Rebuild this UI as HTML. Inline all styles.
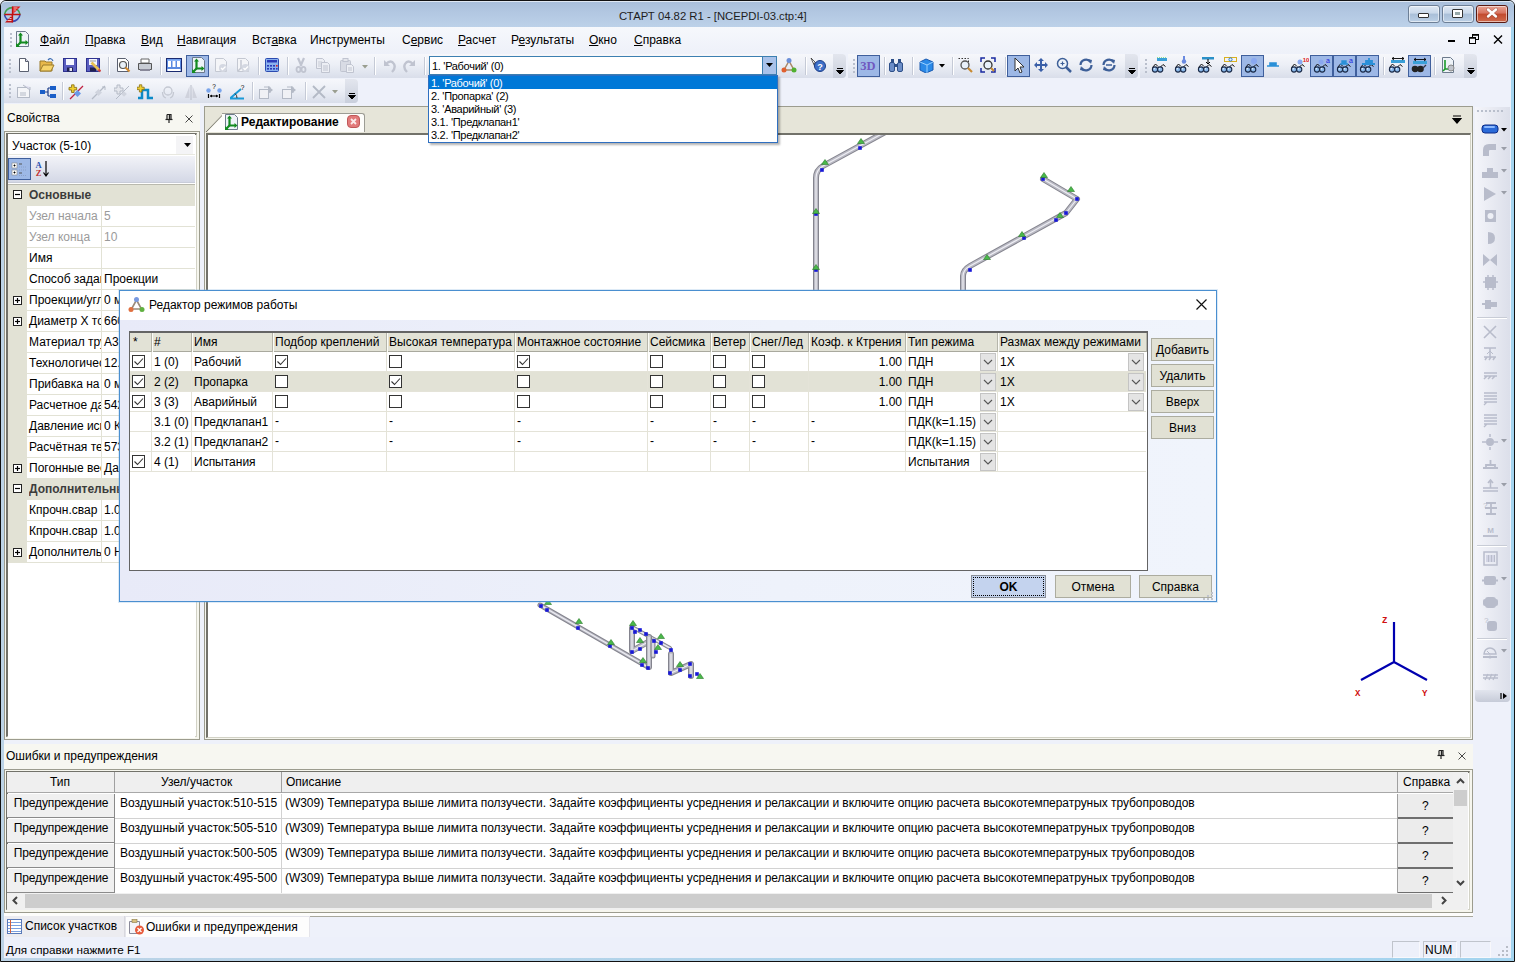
<!DOCTYPE html><html><head><meta charset="utf-8"><style>
*{box-sizing:border-box;margin:0;padding:0}
html,body{width:1515px;height:962px;overflow:hidden;background:#eef1f9;font-family:"Liberation Sans",sans-serif;font-size:12px;color:#000}
.abs{position:absolute}
.t{position:absolute;white-space:nowrap;line-height:14px}
.tb{position:absolute;height:24px;background:linear-gradient(#f6f7fb 0%,#eceff6 45%,#d9deea 100%);border-radius:0 4px 4px 0}
.grip{position:absolute;width:2px;height:14px;background:repeating-linear-gradient(#b9bfcc 0 2px,transparent 2px 4px)}
.sep{position:absolute;width:1px;height:18px;background:#c5cad6;box-shadow:1px 0 0 #fff}
.hl{position:absolute;background:#9db8e6;border:1px solid #3f5f9c}
.chev{position:absolute;width:13px;height:24px;background:linear-gradient(#e3e6ee,#c9cfdc);border-radius:0 4px 4px 0}
.ico{position:absolute}
u{text-decoration:underline;text-underline-offset:1px;text-decoration-thickness:1px}
</style></head><body>
<div class="abs" style="left:0;top:0;width:1515px;height:962px;background:linear-gradient(90deg,#bcd3e6 0,#bcd3e6 6px,#a4d4ef 1500px);border:1px solid #111;border-radius:6px 6px 0 0"></div>
<div class="abs" style="left:1px;top:1px;width:1513px;height:26px;background:linear-gradient(#a9bfdb 0%,#b2c7e1 40%,#bcd1e9 100%);border-radius:5px 5px 0 0;border-top:1px solid #dfe8f3"></div>
<div class="t" style="left:619px;top:9px;font-size:11.3px;color:#1e1e1e">СТАРТ 04.82 R1 - [NCEPDI-03.ctp:4]</div>
<svg class="ico" style="left:3px;top:5px" width="19" height="19" viewBox="0 0 19 19"><path d="M1.5 9.5A7.8 7.8 0 0 1 17 9.5" fill="none" stroke="#40a050" stroke-width="1.6"/><path d="M1.5 9.5A7.8 7.8 0 0 0 17 9.5" fill="none" stroke="#3848b0" stroke-width="1.6"/><path d="M9.5 1.5h8l-8 8z" fill="#d81818"/><path d="M9.5 9.5v8H2z" fill="#c01818"/><path d="M1.5 9.5h16M9.5 1.5v16" stroke="#c01010" stroke-width="1.3"/><path d="M10.5 3h4M10.5 5h2.5M10.5 7h1M4.5 15.5h4M6.5 13.5h2M7.5 11.5h1" stroke="#f8d0d0" stroke-width=".9"/></svg>
<div class="abs" style="left:1408px;top:5px;width:32px;height:18px;background:linear-gradient(#dfe8f3 0%,#c9d8ea 45%,#a9bfd8 50%,#bcd0e6 100%);border:1px solid #6d7f96;border-radius:3px;box-shadow:inset 0 0 0 1px rgba(255,255,255,.55)"></div>
<div class="abs" style="left:1442px;top:5px;width:32px;height:18px;background:linear-gradient(#dfe8f3 0%,#c9d8ea 45%,#a9bfd8 50%,#bcd0e6 100%);border:1px solid #6d7f96;border-radius:3px;box-shadow:inset 0 0 0 1px rgba(255,255,255,.55)"></div>
<div class="abs" style="left:1476px;top:5px;width:32px;height:18px;background:linear-gradient(#e8a393 0%,#d7735f 45%,#c24a2e 50%,#cf6a4c 100%);border:1px solid #5a1a12;border-radius:3px;box-shadow:inset 0 0 0 1px rgba(255,255,255,.55)"></div>
<div class="abs" style="left:1418px;top:13px;width:11px;height:5px;background:#fff;border:1px solid #333;border-radius:1px"></div>
<div class="abs" style="left:1452px;top:9px;width:11px;height:9px;background:#fff;border:1px solid #333;border-radius:1px"></div><div class="abs" style="left:1455px;top:12px;width:5px;height:3px;background:#9aa;"></div>
<svg class="ico" style="left:1485px;top:7px" width="14" height="12" viewBox="0 0 14 12"><path d="M3 2.5L11 9.5M11 2.5L3 9.5" stroke="#5a3028" stroke-width="3.6" stroke-linecap="round" opacity=".35"/><path d="M3 2.5L11 9.5M11 2.5L3 9.5" stroke="#fff" stroke-width="2.4" stroke-linecap="round"/></svg>
<div class="abs" style="left:4px;top:27px;width:1507px;height:931px;background:#eef1fa"></div>
<div class="abs" style="left:4px;top:27px;width:1507px;height:26px;background:linear-gradient(#f6f8fc,#eef1f9)"></div>
<div class="grip" style="left:10px;top:33px"></div>
<svg class="ico" style="left:14px;top:31px" width="16" height="17" viewBox="0 0 16 17"><path d="M2.5 .5h9l3 3v12h-12z" fill="#eef3f8" stroke="#6c7a8c"/><path d="M6.5 3v8.5h6" fill="none" stroke="#138a20" stroke-width="2.2"/><path d="M6.5 11.5l-3.5 3.5" stroke="#138a20" stroke-width="2.2"/><path d="M4 4.5l2.5-3 2.5 3zM11.5 9l3 2.5-3 2.5zM2 12v4h4z" fill="#138a20"/></svg>
<div class="t" style="left:40px;top:33px"><u>Ф</u>айл</div>
<div class="t" style="left:85px;top:33px"><u>П</u>равка</div>
<div class="t" style="left:141px;top:33px"><u>В</u>ид</div>
<div class="t" style="left:177px;top:33px"><u>Н</u>авигация</div>
<div class="t" style="left:252px;top:33px">Вст<u>а</u>вка</div>
<div class="t" style="left:310px;top:33px">Инструменты</div>
<div class="t" style="left:402px;top:33px">С<u>е</u>рвис</div>
<div class="t" style="left:458px;top:33px"><u>Р</u>асчет</div>
<div class="t" style="left:511px;top:33px">Р<u>е</u>зультаты</div>
<div class="t" style="left:589px;top:33px"><u>О</u>кно</div>
<div class="t" style="left:634px;top:33px"><u>С</u>правка</div>
<div class="abs" style="left:1448px;top:40px;width:7px;height:2px;background:#000"></div>
<svg class="ico" style="left:1469px;top:34px" width="10" height="10" viewBox="0 0 10 10"><rect x="3.5" y=".5" width="6" height="5" fill="none" stroke="#000"/><rect x=".5" y="3.5" width="6" height="6" fill="#f4f6fb" stroke="#000"/><path d="M1 4h5" stroke="#000" stroke-width="1.5"/><path d="M4 1h5" stroke="#000" stroke-width="1.5"/></svg>
<svg class="ico" style="left:1493px;top:35px" width="10" height="9" viewBox="0 0 10 9"><path d="M1 .5l8 8M9 .5l-8 8" stroke="#000" stroke-width="1.4"/></svg>
<div class="tb" style="left:4px;top:54px;width:842px"></div>
<div class="grip" style="left:9px;top:59px"></div>
<svg class="ico" style="left:16px;top:57px" width="16" height="16" viewBox="0 0 16 16"><path d="M3.5 1.5h6l3 3v10h-9z" fill="#fff" stroke="#5a6070"/><path d="M9.5 1.5v3h3" fill="#dde" stroke="#5a6070"/></svg>
<svg class="ico" style="left:39px;top:57px" width="16" height="16" viewBox="0 0 16 16"><path d="M1 4h5l1 1h6v9H1z" fill="#e8b84a" stroke="#9a7a2a"/><path d="M1 14l3-6h11l-3 6z" fill="#f6d36a" stroke="#9a7a2a"/><path d="M9 3q3-3 5 1" fill="none" stroke="#3a6ab0" stroke-width="1.2"/></svg>
<svg class="ico" style="left:62px;top:57px" width="16" height="16" viewBox="0 0 16 16"><rect x="1.5" y="1.5" width="13" height="13" fill="#5a5ec0" stroke="#2e3290"/><rect x="4" y="2" width="8" height="6" fill="#f4f6ff"/><rect x="5" y="10.5" width="6" height="4" fill="#1e2050"/><rect x="7.5" y="11" width="2.5" height="3" fill="#e8e8f0"/></svg>
<svg class="ico" style="left:85px;top:57px" width="16" height="16" viewBox="0 0 16 16"><rect x="1.5" y="1.5" width="13" height="13" fill="#5a5ec0" stroke="#2e3290"/><rect x="4" y="2" width="8" height="6" fill="#f4f6ff"/><path d="M5 4h6" stroke="#999"/><rect x="5" y="10.5" width="6" height="4" fill="#1e2050"/><path d="M6.5 5.5l8 8" stroke="#e8c050" stroke-width="2.6"/><path d="M13.5 12.5l2 2" stroke="#d04040" stroke-width="2.2"/></svg>
<svg class="ico" style="left:115px;top:57px" width="16" height="16" viewBox="0 0 16 16"><path d="M2.5 1.5h8l3 3v10h-11z" fill="#fff" stroke="#5a6070"/><circle cx="8" cy="8" r="3.5" fill="#e8f0f8" stroke="#555" stroke-width="1.2"/><path d="M10.5 10.5l4 4" stroke="#d08a30" stroke-width="2.2"/></svg>
<svg class="ico" style="left:137px;top:57px" width="16" height="16" viewBox="0 0 16 16"><path d="M4 2h8v4H4z" fill="#fff" stroke="#666"/><path d="M1.5 6.5h13v6h-13z" fill="#c8ccd4" stroke="#555"/><path d="M3 12h10v2H3z" fill="#889"/></svg>
<svg class="ico" style="left:166px;top:57px" width="16" height="16" viewBox="0 0 16 16"><rect x=".5" y="1.5" width="15" height="13" fill="#5a8ae0" stroke="#1a2a70"/><rect x="1.5" y="2.5" width="13" height="1.5" fill="#8ab4f8"/><rect x="2" y="4" width="3" height="6" fill="#fff"/><rect x="6.5" y="4" width="3" height="6" fill="#fff"/><rect x="11" y="4" width="3" height="6" fill="#fff"/><rect x="1.5" y="12" width="13" height="2" fill="#fff"/></svg>
<div class="sep" style="left:108px;top:57px"></div>
<div class="sep" style="left:160px;top:57px"></div>
<div class="hl" style="left:186px;top:55px;width:23px;height:22px"></div>
<svg class="ico" style="left:190px;top:57px" width="16" height="16" viewBox="0 0 16 16"><path d="M2.5 .5h9l3 3v12h-12z" fill="#eef3f8" stroke="#6c7a8c"/><path d="M6.5 3v8.5h6" fill="none" stroke="#138a20" stroke-width="2.2"/><path d="M6.5 11.5l-3.5 3.5" stroke="#138a20" stroke-width="2.2"/><path d="M4 4.5l2.5-3 2.5 3zM11.5 9l3 2.5-3 2.5zM2 12v4h4z" fill="#138a20"/></svg>
<svg class="ico" style="left:213px;top:57px" width="16" height="16" viewBox="0 0 16 16"><path d="M2.5 1.5h8l3 3v10h-11z" fill="#f4f5f8" stroke="#c4c8d2"/><circle cx="10" cy="11" r="4" fill="#d4d8e2"/><path d="M8 11l1.5 1.5 3-3" fill="none" stroke="#fff" stroke-width="1.3"/></svg>
<svg class="ico" style="left:235px;top:57px" width="16" height="16" viewBox="0 0 16 16"><path d="M2.5 1.5h8l3 3v10h-11z" fill="#f4f5f8" stroke="#c4c8d2"/><path d="M6 3v8l-3 3M6 11h4" fill="none" stroke="#c4c8d2" stroke-width="1.5"/><circle cx="10.5" cy="11" r="4" fill="#d4d8e2"/><path d="M8.5 11l1.5 1.5 3-3" fill="none" stroke="#fff" stroke-width="1.3"/></svg>
<div class="sep" style="left:258px;top:57px"></div>
<svg class="ico" style="left:264px;top:57px" width="16" height="16" viewBox="0 0 16 16"><rect x="1.5" y="1.5" width="13" height="13" rx="1" fill="#8ab0ee" stroke="#2a4ab0"/><rect x="3" y="3" width="10" height="2.5" fill="#2a3ab8"/><g fill="#2a3ab8"><rect x="3" y="8" width="2" height="1.6"/><rect x="6" y="8" width="2" height="1.6"/><rect x="9" y="8" width="2" height="1.6"/><rect x="3" y="11" width="2" height="1.6"/><rect x="6" y="11" width="2" height="1.6"/><rect x="9" y="11" width="2" height="1.6"/></g><rect x="12" y="8" width="1.6" height="1.6" fill="#e02020"/><rect x="12" y="11" width="1.6" height="1.6" fill="#2a3ab8"/></svg>
<div class="sep" style="left:287px;top:57px"></div>
<svg class="ico" style="left:293px;top:57px" width="16" height="16" viewBox="0 0 16 16"><path d="M5 1l3.5 8M11 1L7.5 9" stroke="#c0c4d0" stroke-width="2.2"/><ellipse cx="5.5" cy="12.5" rx="2" ry="2.6" fill="none" stroke="#c0c4d0" stroke-width="1.8"/><ellipse cx="10.5" cy="12.5" rx="2" ry="2.6" fill="none" stroke="#c0c4d0" stroke-width="1.8"/></svg>
<svg class="ico" style="left:315px;top:57px" width="16" height="16" viewBox="0 0 16 16"><path d="M1.5 1.5h6l2 2v8h-8z" fill="#eceef4" stroke="#c0c4d0"/><path d="M3 5h4M3 7h4M3 9h4" stroke="#c8ccd6"/><path d="M6.5 5.5h6l2 2v8h-8z" fill="#eceef4" stroke="#c0c4d0"/><path d="M8 9h5M8 11h5M8 13h5" stroke="#c0c4d0"/></svg>
<svg class="ico" style="left:339px;top:57px" width="16" height="16" viewBox="0 0 16 16"><rect x="1.5" y="3.5" width="10" height="11" rx="1" fill="#d8dbe4" stroke="#c0c4d0"/><rect x="4" y="1.5" width="5" height="3" fill="#e4e6ec" stroke="#c0c4d0"/><path d="M7.5 7.5h5l2 2v6h-7z" fill="#eef0f5" stroke="#c0c4d0"/><path d="M9 11h4M9 13h4" stroke="#c0c4d0"/></svg>
<svg class="ico" style="left:362px;top:65px" width="6" height="4" viewBox="0 0 6 4"><path d="M0 0h6L3 3.5z" fill="#9a9e90"/></svg>
<div class="sep" style="left:374px;top:57px"></div>
<svg class="ico" style="left:381px;top:57px" width="16" height="16" viewBox="0 0 16 16"><path d="M3 3v6h6z" fill="#c0c4d0"/><path d="M5 7q5-5 8 0q2 4-2 8" fill="none" stroke="#c0c4d0" stroke-width="2.4"/></svg>
<svg class="ico" style="left:402px;top:57px" width="16" height="16" viewBox="0 0 16 16"><path d="M13 3v6H7z" fill="#c0c4d0"/><path d="M11 7q-5-5-8 0q-2 4 2 8" fill="none" stroke="#c0c4d0" stroke-width="2.4"/></svg>
<div class="sep" style="left:424px;top:57px"></div>
<svg class="ico" style="left:781px;top:57px" width="16" height="16" viewBox="0 0 16 16"><path d="M8 4L3 13h10z" fill="none" stroke="#aa8866" stroke-width="1.5"/><circle cx="8" cy="3.5" r="2.5" fill="#6b8fd8"/><circle cx="3" cy="13" r="2.5" fill="#e06030"/><circle cx="13" cy="13" r="2.5" fill="#50b030"/></svg>
<div class="sep" style="left:805px;top:57px"></div>
<svg class="ico" style="left:810px;top:57px" width="16" height="16" viewBox="0 0 16 16"><path d="M1 1l5 5-2 0 1 4z" fill="#fff" stroke="#333" stroke-width=".8"/><circle cx="10" cy="9" r="5.5" fill="#3d6fc8" stroke="#1d3f88"/><text x="10" y="12.5" font-size="9" font-weight="bold" text-anchor="middle" fill="#fff" font-family="Liberation Sans">?</text></svg>
<div class="chev" style="left:833px;top:54px"></div>
<svg class="ico" style="left:836px;top:68px" width="8" height="7" viewBox="0 0 8 7"><path d="M1 .5h6M.5 2.5h7l-3.5 3.5z" stroke="#000" fill="#000" stroke-width="1"/></svg>
<div class="tb" style="left:848px;top:54px;width:290px"></div>
<div class="grip" style="left:853px;top:59px"></div>
<div class="hl" style="left:857px;top:55px;width:23px;height:22px"></div>
<svg class="ico" style="left:860px;top:57px" width="16" height="16" viewBox="0 0 16 16"><text x="8" y="13" font-size="12.5" font-weight="bold" text-anchor="middle" fill="#7058c0" font-family="Liberation Serif">3D</text></svg>
<div class="sep" style="left:884px;top:57px"></div>
<svg class="ico" style="left:888px;top:57px" width="16" height="16" viewBox="0 0 16 16"><rect x="1.5" y="5.5" width="5" height="9" rx="1.5" fill="#6c8ec8" stroke="#2d4f88"/><rect x="9.5" y="5.5" width="5" height="9" rx="1.5" fill="#6c8ec8" stroke="#2d4f88"/><rect x="3" y="2" width="3" height="4" fill="#2d4f88"/><rect x="10" y="2" width="3" height="4" fill="#2d4f88"/><rect x="6" y="7" width="4" height="3" fill="#2d4f88"/></svg>
<div class="sep" style="left:912px;top:57px"></div>
<svg class="ico" style="left:918px;top:57px" width="16" height="16" viewBox="0 0 16 16"><path d="M2 5l6-3 7 3v8l-7 3-6-3z" fill="#2a8ae8" stroke="#1a5ab0"/><path d="M2 5l7 3 6-3M9 8v8" fill="none" stroke="#9ad0ff"/></svg>
<svg class="ico" style="left:939px;top:64px" width="6" height="4" viewBox="0 0 6 4"><path d="M0 0h6L3 3.5z" fill="#000"/></svg>
<div class="sep" style="left:952px;top:57px"></div>
<svg class="ico" style="left:957px;top:57px" width="16" height="16" viewBox="0 0 16 16"><path d="M1.5 1.5h10v9" fill="none" stroke="#333" stroke-dasharray="1.5 1.5"/><circle cx="8" cy="8" r="4" fill="#e8f0fa" stroke="#555" stroke-width="1.3"/><path d="M11 11l4 4" stroke="#c88a30" stroke-width="2.2"/></svg>
<svg class="ico" style="left:980px;top:57px" width="16" height="16" viewBox="0 0 16 16"><path d="M1 5V1h4M11 1h4v4M15 11v4h-4M5 15H1v-4" fill="none" stroke="#1a2aa0" stroke-width="1.5"/><circle cx="8" cy="8" r="4" fill="#e8f0fa" stroke="#333" stroke-width="1.3"/><path d="M11 11l3 3" stroke="#c88a30" stroke-width="2"/></svg>
<div class="sep" style="left:1005px;top:57px"></div>
<div class="hl" style="left:1007px;top:55px;width:23px;height:22px"></div>
<svg class="ico" style="left:1011px;top:57px" width="16" height="16" viewBox="0 0 16 16"><path d="M4 1v13l3-3 2 5 2-1-2-5h4z" fill="#fff" stroke="#333"/></svg>
<svg class="ico" style="left:1033px;top:57px" width="16" height="16" viewBox="0 0 16 16"><path d="M8 1l3 3H9v3h3V5l3 3-3 3V9H9v3h2l-3 3-3-3h2V9H4v2L1 8l3-3v2h3V4H5z" fill="#3a5fa8"/></svg>
<svg class="ico" style="left:1056px;top:57px" width="16" height="16" viewBox="0 0 16 16"><circle cx="6.5" cy="6.5" r="5" fill="#eef4fa" stroke="#3d5f98" stroke-width="1.5"/><path d="M4.5 6.5h4M6.5 4.5v4" stroke="#3d5f98" stroke-width="1.2"/><path d="M10 10l5 5" stroke="#3d5f98" stroke-width="2.5"/></svg>
<svg class="ico" style="left:1078px;top:57px" width="16" height="16" viewBox="0 0 16 16"><path d="M2.5 8a5.5 5.5 0 0 1 10-3M13.5 8a5.5 5.5 0 0 1-10 3" fill="none" stroke="#3d5f98" stroke-width="2.2"/><path d="M10 2l4 1-1 4zM6 14l-4-1 1-4z" fill="#3d5f98"/></svg>
<svg class="ico" style="left:1101px;top:57px" width="16" height="16" viewBox="0 0 16 16"><path d="M2.5 8a5.5 5.5 0 0 1 10-3M13.5 8a5.5 5.5 0 0 1-10 3" fill="none" stroke="#3d5f98" stroke-width="2.2"/><path d="M10 2l4 1-1 4zM6 14l-4-1 1-4z" fill="#3d5f98"/><path d="M5 8h6" stroke="#3d5f98" stroke-width="1.5"/></svg>
<div class="chev" style="left:1125px;top:54px"></div>
<svg class="ico" style="left:1128px;top:68px" width="8" height="7" viewBox="0 0 8 7"><path d="M1 .5h6M.5 2.5h7l-3.5 3.5z" stroke="#000" fill="#000" stroke-width="1"/></svg>
<div class="tb" style="left:1140px;top:54px;width:337px"></div>
<div class="grip" style="left:1145px;top:59px"></div>
<svg class="ico" style="left:1151px;top:57px" width="16" height="16" viewBox="0 0 16 16"><path d="M1.5 10.5L4.5 7l2.5 2.5M9 10.5L12 7.5l2.5 2" fill="none" stroke="#111" stroke-width="1"/><circle cx="4" cy="12.5" r="2.6" fill="#8ab8ea" stroke="#1a2a48" stroke-width="1.1"/><circle cx="9.2" cy="12.5" r="2.6" fill="#8ab8ea" stroke="#1a2a48" stroke-width="1.1"/><circle cx="3.3" cy="11.8" r=".8" fill="#e8f4ff"/><circle cx="8.5" cy="11.8" r=".8" fill="#e8f4ff"/></svg>
<svg class="ico" style="left:1174px;top:57px" width="16" height="16" viewBox="0 0 16 16"><path d="M1.5 10.5L4.5 7l2.5 2.5M9 10.5L12 7.5l2.5 2" fill="none" stroke="#111" stroke-width="1"/><circle cx="4" cy="12.5" r="2.6" fill="#8ab8ea" stroke="#1a2a48" stroke-width="1.1"/><circle cx="9.2" cy="12.5" r="2.6" fill="#8ab8ea" stroke="#1a2a48" stroke-width="1.1"/><circle cx="3.3" cy="11.8" r=".8" fill="#e8f4ff"/><circle cx="8.5" cy="11.8" r=".8" fill="#e8f4ff"/></svg>
<svg class="ico" style="left:1197px;top:57px" width="16" height="16" viewBox="0 0 16 16"><path d="M1.5 10.5L4.5 7l2.5 2.5M9 10.5L12 7.5l2.5 2" fill="none" stroke="#111" stroke-width="1"/><circle cx="4" cy="12.5" r="2.6" fill="#8ab8ea" stroke="#1a2a48" stroke-width="1.1"/><circle cx="9.2" cy="12.5" r="2.6" fill="#8ab8ea" stroke="#1a2a48" stroke-width="1.1"/><circle cx="3.3" cy="11.8" r=".8" fill="#e8f4ff"/><circle cx="8.5" cy="11.8" r=".8" fill="#e8f4ff"/></svg>
<svg class="ico" style="left:1220px;top:57px" width="16" height="16" viewBox="0 0 16 16"><path d="M1.5 10.5L4.5 7l2.5 2.5M9 10.5L12 7.5l2.5 2" fill="none" stroke="#111" stroke-width="1"/><circle cx="4" cy="12.5" r="2.6" fill="#8ab8ea" stroke="#1a2a48" stroke-width="1.1"/><circle cx="9.2" cy="12.5" r="2.6" fill="#8ab8ea" stroke="#1a2a48" stroke-width="1.1"/><circle cx="3.3" cy="11.8" r=".8" fill="#e8f4ff"/><circle cx="8.5" cy="11.8" r=".8" fill="#e8f4ff"/></svg>
<svg class="ico" style="left:1290px;top:57px" width="16" height="16" viewBox="0 0 16 16"><path d="M1.5 10.5L4.5 7l2.5 2.5M9 10.5L12 7.5l2.5 2" fill="none" stroke="#111" stroke-width="1"/><circle cx="4" cy="12.5" r="2.6" fill="#8ab8ea" stroke="#1a2a48" stroke-width="1.1"/><circle cx="9.2" cy="12.5" r="2.6" fill="#8ab8ea" stroke="#1a2a48" stroke-width="1.1"/><circle cx="3.3" cy="11.8" r=".8" fill="#e8f4ff"/><circle cx="8.5" cy="11.8" r=".8" fill="#e8f4ff"/></svg>
<svg class="ico" style="left:1155px;top:57px" width="12" height="6" viewBox="0 0 12 6"><rect x="2" y="1" width="10" height="3" fill="#3aa0d8"/><path d="M2 0h10" stroke="#3c3" stroke-dasharray="1 1"/></svg>
<svg class="ico" style="left:1180px;top:56px" width="8" height="8" viewBox="0 0 8 8"><rect x="3" y="0" width="2" height="4" fill="#6a8ae0"/><circle cx="4" cy="5.5" r="2.2" fill="#6a8ae0"/></svg>
<svg class="ico" style="left:1202px;top:57px" width="12" height="8" viewBox="0 0 12 8"><rect x="0" y="0" width="12" height="2.5" fill="#2a90c8"/><path d="M6 2v5M4 5l2 2 2-2" stroke="#000" fill="none"/></svg>
<svg class="ico" style="left:1224px;top:57px" width="13" height="6" viewBox="0 0 13 6"><rect x=".5" y=".5" width="12" height="4" fill="none" stroke="#d8b020"/><circle cx="6.5" cy="2.5" r="1.6" fill="none" stroke="#2a7ac8"/></svg>
<div class="hl" style="left:1241px;top:55px;width:23px;height:22px"></div>
<svg class="ico" style="left:1244px;top:57px" width="16" height="16" viewBox="0 0 16 16"><path d="M1.5 10.5L4.5 7l2.5 2.5M9 10.5L12 7.5l2.5 2" fill="none" stroke="#111" stroke-width="1"/><circle cx="4" cy="12.5" r="2.6" fill="#8ab8ea" stroke="#1a2a48" stroke-width="1.1"/><circle cx="9.2" cy="12.5" r="2.6" fill="#8ab8ea" stroke="#1a2a48" stroke-width="1.1"/><circle cx="3.3" cy="11.8" r=".8" fill="#e8f4ff"/><circle cx="8.5" cy="11.8" r=".8" fill="#e8f4ff"/></svg>
<svg class="ico" style="left:1250px;top:57px" width="8" height="7" viewBox="0 0 8 7"><circle cx="4" cy="4" r="3" fill="#8aa8f0"/></svg>
<svg class="ico" style="left:1266px;top:61px" width="14" height="6" viewBox="0 0 14 6"><path d="M1 5h12M4 5V2h6v3" fill="#2a90d8" stroke="#2a90d8" stroke-width="1.6"/></svg>
<svg class="ico" style="left:1296px;top:57px" width="13" height="8" viewBox="0 0 13 8"><circle cx="4" cy="5" r="2.5" fill="#8aa8f0"/><text x="10" y="5" font-size="6" font-weight="bold" fill="#e02020" text-anchor="middle" font-family="Liberation Sans">10</text></svg>
<div class="hl" style="left:1310px;top:55px;width:23px;height:22px"></div>
<svg class="ico" style="left:1313px;top:57px" width="16" height="16" viewBox="0 0 16 16"><path d="M1.5 10.5L4.5 7l2.5 2.5M9 10.5L12 7.5l2.5 2" fill="none" stroke="#111" stroke-width="1"/><circle cx="4" cy="12.5" r="2.6" fill="#8ab8ea" stroke="#1a2a48" stroke-width="1.1"/><circle cx="9.2" cy="12.5" r="2.6" fill="#8ab8ea" stroke="#1a2a48" stroke-width="1.1"/><circle cx="3.3" cy="11.8" r=".8" fill="#e8f4ff"/><circle cx="8.5" cy="11.8" r=".8" fill="#e8f4ff"/></svg>
<div class="hl" style="left:1333px;top:55px;width:23px;height:22px"></div>
<svg class="ico" style="left:1336px;top:57px" width="16" height="16" viewBox="0 0 16 16"><path d="M1.5 10.5L4.5 7l2.5 2.5M9 10.5L12 7.5l2.5 2" fill="none" stroke="#111" stroke-width="1"/><circle cx="4" cy="12.5" r="2.6" fill="#8ab8ea" stroke="#1a2a48" stroke-width="1.1"/><circle cx="9.2" cy="12.5" r="2.6" fill="#8ab8ea" stroke="#1a2a48" stroke-width="1.1"/><circle cx="3.3" cy="11.8" r=".8" fill="#e8f4ff"/><circle cx="8.5" cy="11.8" r=".8" fill="#e8f4ff"/></svg>
<div class="hl" style="left:1356px;top:55px;width:23px;height:22px"></div>
<svg class="ico" style="left:1359px;top:57px" width="16" height="16" viewBox="0 0 16 16"><path d="M1.5 10.5L4.5 7l2.5 2.5M9 10.5L12 7.5l2.5 2" fill="none" stroke="#111" stroke-width="1"/><circle cx="4" cy="12.5" r="2.6" fill="#8ab8ea" stroke="#1a2a48" stroke-width="1.1"/><circle cx="9.2" cy="12.5" r="2.6" fill="#8ab8ea" stroke="#1a2a48" stroke-width="1.1"/><circle cx="3.3" cy="11.8" r=".8" fill="#e8f4ff"/><circle cx="8.5" cy="11.8" r=".8" fill="#e8f4ff"/></svg>
<svg class="ico" style="left:1316px;top:57px" width="15" height="8" viewBox="0 0 15 8"><circle cx="5" cy="5" r="2.5" fill="#8aa8f0"/><text x="12" y="5.5" font-size="7" fill="#2020e0" text-anchor="middle" font-family="Liberation Sans">a</text></svg>
<svg class="ico" style="left:1339px;top:57px" width="15" height="8" viewBox="0 0 15 8"><path d="M1 7h8M3 7V4h4v3" fill="#2a90d8" stroke="#2a90d8" stroke-width="1.4"/><text x="12" y="5.5" font-size="7" fill="#2020e0" text-anchor="middle" font-family="Liberation Sans">a</text></svg>
<svg class="ico" style="left:1361px;top:57px" width="15" height="8" viewBox="0 0 15 8"><path d="M1 7h13M5 7V4h6v3M8 4V1" fill="#2a90d8" stroke="#2a90d8" stroke-width="1.8"/></svg>
<div class="sep" style="left:1383px;top:57px"></div>
<svg class="ico" style="left:1388px;top:57px" width="16" height="16" viewBox="0 0 16 16"><path d="M1.5 10.5L4.5 7l2.5 2.5M9 10.5L12 7.5l2.5 2" fill="none" stroke="#111" stroke-width="1"/><circle cx="4" cy="12.5" r="2.6" fill="#8ab8ea" stroke="#1a2a48" stroke-width="1.1"/><circle cx="9.2" cy="12.5" r="2.6" fill="#8ab8ea" stroke="#1a2a48" stroke-width="1.1"/><circle cx="3.3" cy="11.8" r=".8" fill="#e8f4ff"/><circle cx="8.5" cy="11.8" r=".8" fill="#e8f4ff"/></svg>
<svg class="ico" style="left:1391px;top:57px" width="14" height="7" viewBox="0 0 14 7"><rect x="0" y="3" width="14" height="3" fill="#3aa0d8"/><path d="M1 1.5h12M1 1.5l2-1.5M1 1.5l2 1.5M13 1.5l-2-1.5M13 1.5l-2 1.5" stroke="#000" stroke-width=".9"/></svg>
<div class="hl" style="left:1408px;top:55px;width:23px;height:22px"></div>
<svg class="ico" style="left:1411px;top:57px" width="16" height="16" viewBox="0 0 16 16"><circle cx="4" cy="12" r="2.6" fill="#222" stroke="#222" stroke-width="1.4"/><circle cx="9.5" cy="12" r="2.6" fill="#222" stroke="#222" stroke-width="1.4"/><path d="M12 11l3-3" stroke="#334" stroke-width="1.2"/><rect x="2" y="4" width="14" height="3" fill="#3aa0d8"/><path d="M3 2.5h12M3 2.5l2-1.5M3 2.5l2 1.5M15 2.5l-2-1.5M15 2.5l-2 1.5" stroke="#000" stroke-width=".9"/></svg>
<div class="sep" style="left:1434px;top:57px"></div>
<svg class="ico" style="left:1440px;top:57px" width="16" height="16" viewBox="0 0 16 16"><path d="M2.5 .5h8l3 3v12h-11z" fill="#eef3f8" stroke="#6c7a8c"/><path d="M5 3v9l-2 2M5 12h5" fill="none" stroke="#1a9a2a" stroke-width="1.6"/><circle cx="11" cy="11" r="3" fill="#c0c4cc" stroke="#888"/></svg>
<div class="chev" style="left:1464px;top:54px"></div>
<svg class="ico" style="left:1467px;top:68px" width="8" height="7" viewBox="0 0 8 7"><path d="M1 .5h6M.5 2.5h7l-3.5 3.5z" stroke="#000" fill="#000" stroke-width="1"/></svg>
<div class="tb" style="left:4px;top:79px;width:354px"></div>
<div class="grip" style="left:9px;top:84px"></div>
<svg class="ico" style="left:16px;top:84px" width="16" height="16" viewBox="0 0 16 16"><rect x="1.5" y="3.5" width="12" height="10" fill="#f4f5f8" stroke="#b4bac6"/><path d="M7 1l7 5v-3" fill="#dde" stroke="#b4bac6"/><path d="M4 9h6M4 11h6" stroke="#b4bac6"/></svg>
<svg class="ico" style="left:40px;top:84px" width="16" height="16" viewBox="0 0 16 16"><rect x="0" y="6" width="5" height="4" fill="#1a5ec8"/><rect x="10" y="2" width="6" height="4" fill="#1a5ec8"/><rect x="10" y="10" width="6" height="4" fill="#1a5ec8"/><path d="M5 8h3M8 4v8M8 4h2M8 12h2" stroke="#1a3a88" stroke-width="1.2"/></svg>
<svg class="ico" style="left:68px;top:84px" width="16" height="16" viewBox="0 0 16 16"><path d="M2 15L15 2" stroke="#c02040" stroke-width="1.2"/><path d="M3 1h3v3h3v3H6v3H3V7H0V4h3z" transform="translate(1 0) scale(.85)" fill="#f0d030" stroke="#8a7010"/><rect x="7" y="7" width="5" height="5" transform="rotate(45 9.5 9.5)" fill="#6a9ae8"/></svg>
<svg class="ico" style="left:90px;top:84px" width="16" height="16" viewBox="0 0 16 16"><path d="M2 15L15 2" stroke="#b4bac6" stroke-width="1.2"/><rect x="6" y="6" width="5" height="5" transform="rotate(45 8.5 8.5)" fill="#d0d4de"/><path d="M12 3l3 0-0 3" fill="none" stroke="#b4bac6"/></svg>
<svg class="ico" style="left:114px;top:84px" width="16" height="16" viewBox="0 0 16 16"><path d="M3 1h3v3h3v3H6v3H3V7H0V4h3z" fill="#e4e6ec" stroke="#b4bac6"/><path d="M2 15L15 2" stroke="#b4bac6"/><rect x="8" y="8" width="4" height="4" transform="rotate(45 10 10)" fill="#d0d4de"/></svg>
<svg class="ico" style="left:137px;top:84px" width="16" height="16" viewBox="0 0 16 16"><path d="M1 14h4V6h6v8h5" fill="none" stroke="#0a8ac8" stroke-width="2.5"/><path d="M3 1h3v3h3v3H6v3H3V7H0V4h3z" transform="scale(.8)" fill="#f0d030" stroke="#8a7010"/></svg>
<svg class="ico" style="left:160px;top:84px" width="16" height="16" viewBox="0 0 16 16"><circle cx="8" cy="7" r="4" fill="none" stroke="#c4c8d2" stroke-width="1.3"/><path d="M2.5 8q0 5 3.5 6M13.5 8q0 5-3.5 6" fill="none" stroke="#c4c8d2" stroke-width="1.3"/></svg>
<svg class="ico" style="left:183px;top:84px" width="16" height="16" viewBox="0 0 16 16"><path d="M6.5 2v12H2zM9.5 2v12H14z" fill="#cfd2dc"/><path d="M8 1v15" stroke="#b8bcc8"/></svg>
<svg class="ico" style="left:206px;top:84px" width="16" height="16" viewBox="0 0 16 16"><circle cx="2.5" cy="6.5" r="2.2" fill="#7aa4ea"/><circle cx="13.5" cy="6.5" r="2.2" fill="#7aa4ea"/><path d="M2.5 10v4M13.5 10v4M4 12h8" stroke="#000" stroke-width="1.2"/><path d="M4 12l2-1.5v3zM12 12l-2-1.5v3z" fill="#000"/><text x="8" y="5" font-size="6.5" text-anchor="middle" font-family="Liberation Sans">?</text></svg>
<svg class="ico" style="left:229px;top:84px" width="16" height="16" viewBox="0 0 16 16"><path d="M1 14.5h14M1.5 14L12 5" stroke="#1a9ad8" stroke-width="2"/><path d="M8 14q0-3-2-4.5" fill="none" stroke="#222" stroke-width=".9"/><text x="13.5" y="6" font-size="6.5" text-anchor="middle" font-family="Liberation Sans">?</text></svg>
<svg class="ico" style="left:258px;top:84px" width="16" height="16" viewBox="0 0 16 16"><rect x="1.5" y="5.5" width="9" height="9" fill="#f0f1f5" stroke="#b4bac6"/><path d="M6 3h6v6" fill="none" stroke="#b4bac6"/><path d="M10 2l5 4-5 4z" fill="#b4bac6"/></svg>
<svg class="ico" style="left:281px;top:84px" width="16" height="16" viewBox="0 0 16 16"><rect x="1.5" y="5.5" width="9" height="9" fill="#f0f1f5" stroke="#b4bac6"/><path d="M6 3h6v6" fill="none" stroke="#b4bac6"/><path d="M10 2l5 4-5 4z" fill="#b4bac6"/></svg>
<div class="sep" style="left:62px;top:82px"></div>
<div class="sep" style="left:252px;top:82px"></div>
<div class="sep" style="left:305px;top:82px"></div>
<svg class="ico" style="left:311px;top:84px" width="16" height="16" viewBox="0 0 16 16"><path d="M2 2l12 12M14 2L2 14" stroke="#b4bac6" stroke-width="1.8"/></svg>
<svg class="ico" style="left:332px;top:90px" width="6" height="4" viewBox="0 0 6 4"><path d="M0 0h6L3 3.5z" fill="#9a9e90"/></svg>
<div class="chev" style="left:345px;top:79px"></div>
<svg class="ico" style="left:348px;top:93px" width="8" height="7" viewBox="0 0 8 7"><path d="M1 .5h6M.5 2.5h7l-3.5 3.5z" stroke="#000" fill="#000" stroke-width="1"/></svg>
<div class="abs" style="left:4px;top:104px;width:196px;height:27px;background:#f7f7f1"></div>
<div class="t" style="left:7px;top:111px">Свойства</div>
<svg class="ico" style="left:165px;top:114px" width="8" height="9" viewBox="0 0 8 9"><path d="M2 .5h4v4.5M2 .5v4.5" fill="none" stroke="#222" stroke-width="1.2"/><path d="M4.5 1v4" stroke="#222" stroke-width="1.4"/><path d="M.5 5.5h7" stroke="#222" stroke-width="1.2"/><path d="M4 6v3" stroke="#222" stroke-width="1.2"/></svg>
<svg class="ico" style="left:185px;top:115px" width="8" height="8" viewBox="0 0 8 8"><path d="M.5 .5l7 7M7.5 .5l-7 7" stroke="#333" stroke-width=".9"/></svg>
<div class="abs" style="left:4px;top:131px;width:196px;height:609px;background:#f6f6ee;border:1px solid #9c9c8e"></div>
<div class="abs" style="left:6px;top:133px;width:191px;height:604px;background:#fff;border-top:2px solid #72726a;border-left:2px solid #72726a;border-right:1px solid #d2d2c6;border-bottom:1px solid #d2d2c6"></div>
<div class="abs" style="left:8px;top:134px;width:187px;height:21px;background:#fff;border-bottom:1px solid #e8e8e0"></div>
<div class="t" style="left:12px;top:139px">Участок (5-10)</div>
<div class="abs" style="left:176px;top:136px;width:17px;height:18px;background:#f4f4f6"></div>
<svg class="ico" style="left:184px;top:143px" width="7" height="4" viewBox="0 0 7 4"><path d="M0 0h7L3.5 4z" fill="#000"/></svg>
<div class="abs" style="left:8px;top:156px;width:187px;height:27px;background:linear-gradient(#f2f3f8,#d4d8e6);border-bottom:1px solid #c8ccd8"></div>
<div class="abs" style="left:8px;top:158px;width:23px;height:22px;background:#9db8e6;border:1px solid #3f5f9c"></div>
<svg class="ico" style="left:11px;top:161px" width="17" height="16" viewBox="0 0 17 16"><rect x="1" y="2" width="5" height="5" fill="#fff" stroke="#888" stroke-width=".6"/><path d="M2.5 4.5h2M3.5 3.5v2" stroke="#000" stroke-width=".9"/><rect x="1" y="9" width="5" height="5" fill="#fff" stroke="#888" stroke-width=".6"/><path d="M2.5 11.5h2M3.5 10.5v2" stroke="#000" stroke-width=".9"/><path d="M8 3h3M8 12h3" stroke="#555" stroke-width="1.2"/><path d="M8 6h8M8 9h8M8 14.5h8" stroke="#8aa0c8" stroke-width="1" stroke-dasharray="1 1"/></svg>
<svg class="ico" style="left:34px;top:160px" width="16" height="18" viewBox="0 0 16 18"><text x="4.5" y="8" font-size="8.5" font-weight="bold" fill="#2a50b0" text-anchor="middle" font-family="Liberation Serif">A</text><text x="4.5" y="16" font-size="8.5" font-weight="bold" fill="#c03030" text-anchor="middle" font-family="Liberation Serif">Z</text><path d="M12 1v15M9.5 12.5L12 16l2.5-3.5" stroke="#000" fill="none" stroke-width="1.2"/></svg>
<div class="abs" style="left:8px;top:184px;width:187px;height:379px;background:#e2e2d5"></div>
<div class="abs" style="left:8px;top:184px;width:187px;height:1px;background:#b9b9ae"></div>
<svg class="ico" style="left:13px;top:190px" width="9" height="9" viewBox="0 0 9 9"><rect x=".5" y=".5" width="8" height="8" fill="#fff" stroke="#222"/><path d="M2 4.5h5" stroke="#000" stroke-width="1.2"/></svg>
<div class="t" style="left:29px;top:188px;font-weight:bold;color:#3c3c3c;width:166px;overflow:hidden">Основные</div>
<div class="abs" style="left:27px;top:206px;width:74px;height:20px;background:#fff;overflow:hidden"><div class="t" style="left:2px;top:3px;color:#9a9a9a">Узел начала</div></div>
<div class="abs" style="left:102px;top:206px;width:93px;height:20px;background:#fff;overflow:hidden"><div class="t" style="left:2px;top:3px;color:#9a9a9a">5</div></div>
<div class="abs" style="left:27px;top:227px;width:74px;height:20px;background:#fff;overflow:hidden"><div class="t" style="left:2px;top:3px;color:#9a9a9a">Узел конца</div></div>
<div class="abs" style="left:102px;top:227px;width:93px;height:20px;background:#fff;overflow:hidden"><div class="t" style="left:2px;top:3px;color:#9a9a9a">10</div></div>
<div class="abs" style="left:27px;top:248px;width:74px;height:20px;background:#fff;overflow:hidden"><div class="t" style="left:2px;top:3px;color:#000">Имя</div></div>
<div class="abs" style="left:102px;top:248px;width:93px;height:20px;background:#fff;overflow:hidden"><div class="t" style="left:2px;top:3px;color:#000"></div></div>
<div class="abs" style="left:27px;top:269px;width:74px;height:20px;background:#fff;overflow:hidden"><div class="t" style="left:2px;top:3px;color:#000">Способ задания</div></div>
<div class="abs" style="left:102px;top:269px;width:93px;height:20px;background:#fff;overflow:hidden"><div class="t" style="left:2px;top:3px;color:#000">Проекции</div></div>
<div class="abs" style="left:27px;top:290px;width:74px;height:20px;background:#fff;overflow:hidden"><div class="t" style="left:2px;top:3px;color:#000">Проекции/углы</div></div>
<div class="abs" style="left:102px;top:290px;width:93px;height:20px;background:#fff;overflow:hidden"><div class="t" style="left:2px;top:3px;color:#000">0 м</div></div>
<svg class="ico" style="left:13px;top:296px" width="9" height="9" viewBox="0 0 9 9"><rect x=".5" y=".5" width="8" height="8" fill="#fff" stroke="#222"/><path d="M2 4.5h5" stroke="#000" stroke-width="1.2"/><path d="M4.5 2v5" stroke="#000" stroke-width="1.2"/></svg>
<div class="abs" style="left:27px;top:311px;width:74px;height:20px;background:#fff;overflow:hidden"><div class="t" style="left:2px;top:3px;color:#000">Диаметр X толщина</div></div>
<div class="abs" style="left:102px;top:311px;width:93px;height:20px;background:#fff;overflow:hidden"><div class="t" style="left:2px;top:3px;color:#000">660</div></div>
<svg class="ico" style="left:13px;top:317px" width="9" height="9" viewBox="0 0 9 9"><rect x=".5" y=".5" width="8" height="8" fill="#fff" stroke="#222"/><path d="M2 4.5h5" stroke="#000" stroke-width="1.2"/><path d="M4.5 2v5" stroke="#000" stroke-width="1.2"/></svg>
<div class="abs" style="left:27px;top:332px;width:74px;height:20px;background:#fff;overflow:hidden"><div class="t" style="left:2px;top:3px;color:#000">Материал трубы</div></div>
<div class="abs" style="left:102px;top:332px;width:93px;height:20px;background:#fff;overflow:hidden"><div class="t" style="left:2px;top:3px;color:#000">А3</div></div>
<div class="abs" style="left:27px;top:353px;width:74px;height:20px;background:#fff;overflow:hidden"><div class="t" style="left:2px;top:3px;color:#000">Технологический</div></div>
<div class="abs" style="left:102px;top:353px;width:93px;height:20px;background:#fff;overflow:hidden"><div class="t" style="left:2px;top:3px;color:#000">12.</div></div>
<div class="abs" style="left:27px;top:374px;width:74px;height:20px;background:#fff;overflow:hidden"><div class="t" style="left:2px;top:3px;color:#000">Прибавка на</div></div>
<div class="abs" style="left:102px;top:374px;width:93px;height:20px;background:#fff;overflow:hidden"><div class="t" style="left:2px;top:3px;color:#000">0 м</div></div>
<div class="abs" style="left:27px;top:395px;width:74px;height:20px;background:#fff;overflow:hidden"><div class="t" style="left:2px;top:3px;color:#000">Расчетное давление</div></div>
<div class="abs" style="left:102px;top:395px;width:93px;height:20px;background:#fff;overflow:hidden"><div class="t" style="left:2px;top:3px;color:#000">542</div></div>
<div class="abs" style="left:27px;top:416px;width:74px;height:20px;background:#fff;overflow:hidden"><div class="t" style="left:2px;top:3px;color:#000">Давление испытаний</div></div>
<div class="abs" style="left:102px;top:416px;width:93px;height:20px;background:#fff;overflow:hidden"><div class="t" style="left:2px;top:3px;color:#000">0 К</div></div>
<div class="abs" style="left:27px;top:437px;width:74px;height:20px;background:#fff;overflow:hidden"><div class="t" style="left:2px;top:3px;color:#000">Расчётная температура</div></div>
<div class="abs" style="left:102px;top:437px;width:93px;height:20px;background:#fff;overflow:hidden"><div class="t" style="left:2px;top:3px;color:#000">573</div></div>
<div class="abs" style="left:27px;top:458px;width:74px;height:20px;background:#fff;overflow:hidden"><div class="t" style="left:2px;top:3px;color:#000">Погонные веса</div></div>
<div class="abs" style="left:102px;top:458px;width:93px;height:20px;background:#fff;overflow:hidden"><div class="t" style="left:2px;top:3px;color:#000">Да</div></div>
<svg class="ico" style="left:13px;top:464px" width="9" height="9" viewBox="0 0 9 9"><rect x=".5" y=".5" width="8" height="8" fill="#fff" stroke="#222"/><path d="M2 4.5h5" stroke="#000" stroke-width="1.2"/><path d="M4.5 2v5" stroke="#000" stroke-width="1.2"/></svg>
<svg class="ico" style="left:13px;top:484px" width="9" height="9" viewBox="0 0 9 9"><rect x=".5" y=".5" width="8" height="8" fill="#fff" stroke="#222"/><path d="M2 4.5h5" stroke="#000" stroke-width="1.2"/></svg>
<div class="t" style="left:29px;top:482px;font-weight:bold;color:#3c3c3c;width:166px;overflow:hidden">Дополнительные</div>
<div class="abs" style="left:27px;top:500px;width:74px;height:20px;background:#fff;overflow:hidden"><div class="t" style="left:2px;top:3px;color:#000">Кпрочн.свар</div></div>
<div class="abs" style="left:102px;top:500px;width:93px;height:20px;background:#fff;overflow:hidden"><div class="t" style="left:2px;top:3px;color:#000">1.0</div></div>
<div class="abs" style="left:27px;top:521px;width:74px;height:20px;background:#fff;overflow:hidden"><div class="t" style="left:2px;top:3px;color:#000">Кпрочн.свар</div></div>
<div class="abs" style="left:102px;top:521px;width:93px;height:20px;background:#fff;overflow:hidden"><div class="t" style="left:2px;top:3px;color:#000">1.0</div></div>
<div class="abs" style="left:27px;top:542px;width:74px;height:20px;background:#fff;overflow:hidden"><div class="t" style="left:2px;top:3px;color:#000">Дополнительно</div></div>
<div class="abs" style="left:102px;top:542px;width:93px;height:20px;background:#fff;overflow:hidden"><div class="t" style="left:2px;top:3px;color:#000">0 Н</div></div>
<svg class="ico" style="left:13px;top:548px" width="9" height="9" viewBox="0 0 9 9"><rect x=".5" y=".5" width="8" height="8" fill="#fff" stroke="#222"/><path d="M2 4.5h5" stroke="#000" stroke-width="1.2"/><path d="M4.5 2v5" stroke="#000" stroke-width="1.2"/></svg>
<div class="abs" style="left:8px;top:563px;width:187px;height:175px;background:#fff"></div>
<div class="abs" style="left:204px;top:106px;width:1269px;height:634px;background:#e3e2d6;border:1px solid #9c9c8e"></div>
<div class="abs" style="left:205px;top:107px;width:1267px;height:26px;background:#e6e5d9"></div>
<svg class="ico" style="left:205px;top:112px" width="20" height="21" viewBox="0 0 20 21"><path d="M.5 20.5L18 2.5" stroke="#7a7a70" stroke-width="1"/><path d="M1.5 21L18.5 3V21z" fill="#fdfdfb"/></svg>
<div class="abs" style="left:222px;top:113px;width:143px;height:20px;background:#fdfdfb;border-top:1px solid #9c9c94;border-right:1px solid #9c9c94;border-radius:0 3px 0 0"></div>
<svg class="ico" style="left:223px;top:114px" width="16" height="16" viewBox="0 0 16 16"><path d="M2.5 .5h9l3 3v12h-12z" fill="#eef3f8" stroke="#6c7a8c"/><path d="M6.5 3v8.5h6" fill="none" stroke="#138a20" stroke-width="2.2"/><path d="M6.5 11.5l-3.5 3.5" stroke="#138a20" stroke-width="2.2"/><path d="M4 4.5l2.5-3 2.5 3zM11.5 9l3 2.5-3 2.5zM2 12v4h4z" fill="#138a20"/></svg>
<div class="t" style="left:241px;top:115px;font-weight:bold">Редактирование</div>
<svg class="ico" style="left:347px;top:115px" width="13" height="13" viewBox="0 0 13 13"><rect x=".5" y=".5" width="12" height="12" rx="3.5" fill="#e27a7a" stroke="#c05858"/><path d="M4 4l5 5M9 4l-5 5" stroke="#fbeaea" stroke-width="1.8"/></svg>
<svg class="ico" style="left:1452px;top:115px" width="10" height="10" viewBox="0 0 10 10"><path d="M1 1h8M1 3.5h8L5 8z" fill="#000" stroke="#000" stroke-width="1.2"/></svg>
<div class="abs" style="left:205px;top:132px;width:1267px;height:607px;background:#fff;border:1px solid #f6f6ee;border-top-color:#e6e5d9"></div>
<div class="abs" style="left:206px;top:133px;width:1265px;height:605px;border-top:2px solid #72726a;border-left:2px solid #72726a;border-right:1px solid #d2d2c6;border-bottom:1px solid #d2d2c6"></div>
<div class="abs" style="left:1475px;top:107px;width:35px;height:595px;background:linear-gradient(90deg,#f4f5fa,#dcdfea);border-radius:0 0 4px 4px"></div>
<div class="abs" style="left:1477px;top:110px;width:28px;height:2px;background:repeating-linear-gradient(90deg,#b9bfcc 0 2px,transparent 2px 4px)"></div>
<div class="abs" style="left:1475px;top:690px;width:35px;height:12px;background:linear-gradient(#e2e5ee,#c6cbd8);border-radius:0 0 4px 4px"></div>
<svg class="ico" style="left:1500px;top:692px" width="8" height="8" viewBox="0 0 8 8"><path d="M1 1v6" stroke="#000" stroke-width="1.2"/><path d="M3 1l4 3-4 3z" fill="#000"/></svg>
<div class="abs" style="left:4px;top:744px;width:1469px;height:25px;background:#f7f7f1"></div>
<div class="t" style="left:6px;top:749px">Ошибки и предупреждения</div>
<svg class="ico" style="left:1437px;top:750px" width="8" height="9" viewBox="0 0 8 9"><path d="M2 .5h4v4.5M2 .5v4.5" fill="none" stroke="#222" stroke-width="1.2"/><path d="M4.5 1v4" stroke="#222" stroke-width="1.4"/><path d="M.5 5.5h7" stroke="#222" stroke-width="1.2"/><path d="M4 6v3" stroke="#222" stroke-width="1.2"/></svg>
<svg class="ico" style="left:1458px;top:752px" width="8" height="8" viewBox="0 0 8 8"><path d="M.5 .5l7 7M7.5 .5l-7 7" stroke="#333" stroke-width=".9"/></svg>
<div class="abs" style="left:4px;top:769px;width:1469px;height:144px;background:#f6f6ee;border:1px solid #9c9c8e"></div>
<div class="abs" style="left:6px;top:771px;width:1464px;height:139px;background:#fff;border-top:2px solid #72726a;border-left:2px solid #72726a;border-right:1px solid #d2d2c6;border-bottom:1px solid #d2d2c6"></div>
<div class="abs" style="left:4px;top:913px;width:1507px;height:24px;background:#eef1fa"></div>
<div class="abs" style="left:4px;top:913px;width:1469px;height:3px;background:#fdfdfb"></div>
<div class="abs" style="left:310px;top:916px;width:1163px;height:1px;background:#a8a89c"></div>
<div class="abs" style="left:4px;top:937px;width:1507px;height:21px;background:#edf0fa"></div>
<div class="t" style="left:6px;top:943px;font-size:11.7px">Для справки нажмите F1</div>
<div class="abs" style="left:7px;top:772px;width:1446px;height:21px;background:#efefef;border-bottom:1px solid #a8a8a8"></div>
<div class="abs" style="left:114px;top:772px;width:1px;height:21px;background:#a0a0a0"></div>
<div class="abs" style="left:281px;top:772px;width:1px;height:21px;background:#a0a0a0"></div>
<div class="abs" style="left:1397px;top:772px;width:1px;height:21px;background:#a0a0a0"></div>
<div class="t" style="left:50px;top:775px">Тип</div>
<div class="t" style="left:161px;top:775px">Узел/участок</div>
<div class="t" style="left:286px;top:775px">Описание</div>
<div class="t" style="left:1403px;top:775px">Справка</div>
<div class="abs" style="left:7px;top:794px;width:107px;height:24px;background:#f0f0f0;border-bottom:1px solid #8a8a8a"></div>
<div class="abs" style="left:114px;top:794px;width:1px;height:25px;background:#8a8a8a"></div>
<div class="abs" style="left:115px;top:818px;width:1282px;height:1px;background:#d2d2d2"></div>
<div class="abs" style="left:281px;top:794px;width:1px;height:25px;background:#d2d2d2"></div>
<div class="t" style="left:8px;width:106px;text-align:center;top:796px;letter-spacing:-.1px">Предупреждение</div>
<div class="t" style="left:120px;top:796px">Воздушный участок:510-515</div>
<div class="t" style="left:285px;top:796px;letter-spacing:-.05px">(W309) Температура выше лимита ползучести. Задайте коэффициенты усреднения и релаксации и включите опцию расчета высокотемператруных трубопроводов</div>
<div class="abs" style="left:1397px;top:794px;width:56px;height:25px;background:#ececec;border-left:1px solid #fff;border-bottom:2px solid #6e6e6e"></div>
<div class="t" style="left:1422px;top:799px">?</div>
<div class="abs" style="left:7px;top:819px;width:107px;height:24px;background:#f0f0f0;border-bottom:1px solid #8a8a8a"></div>
<div class="abs" style="left:114px;top:819px;width:1px;height:25px;background:#8a8a8a"></div>
<div class="abs" style="left:115px;top:843px;width:1282px;height:1px;background:#d2d2d2"></div>
<div class="abs" style="left:281px;top:819px;width:1px;height:25px;background:#d2d2d2"></div>
<div class="t" style="left:8px;width:106px;text-align:center;top:821px;letter-spacing:-.1px">Предупреждение</div>
<div class="t" style="left:120px;top:821px">Воздушный участок:505-510</div>
<div class="t" style="left:285px;top:821px;letter-spacing:-.05px">(W309) Температура выше лимита ползучести. Задайте коэффициенты усреднения и релаксации и включите опцию расчета высокотемператруных трубопроводов</div>
<div class="abs" style="left:1397px;top:819px;width:56px;height:25px;background:#ececec;border-left:1px solid #fff;border-bottom:2px solid #6e6e6e"></div>
<div class="t" style="left:1422px;top:824px">?</div>
<div class="abs" style="left:7px;top:844px;width:107px;height:24px;background:#f0f0f0;border-bottom:1px solid #8a8a8a"></div>
<div class="abs" style="left:114px;top:844px;width:1px;height:25px;background:#8a8a8a"></div>
<div class="abs" style="left:115px;top:868px;width:1282px;height:1px;background:#d2d2d2"></div>
<div class="abs" style="left:281px;top:844px;width:1px;height:25px;background:#d2d2d2"></div>
<div class="t" style="left:8px;width:106px;text-align:center;top:846px;letter-spacing:-.1px">Предупреждение</div>
<div class="t" style="left:120px;top:846px">Воздушный участок:500-505</div>
<div class="t" style="left:285px;top:846px;letter-spacing:-.05px">(W309) Температура выше лимита ползучести. Задайте коэффициенты усреднения и релаксации и включите опцию расчета высокотемператруных трубопроводов</div>
<div class="abs" style="left:1397px;top:844px;width:56px;height:25px;background:#ececec;border-left:1px solid #fff;border-bottom:2px solid #6e6e6e"></div>
<div class="t" style="left:1422px;top:849px">?</div>
<div class="abs" style="left:7px;top:869px;width:107px;height:24px;background:#f0f0f0;border-bottom:1px solid #8a8a8a"></div>
<div class="abs" style="left:114px;top:869px;width:1px;height:25px;background:#8a8a8a"></div>
<div class="abs" style="left:115px;top:893px;width:1282px;height:1px;background:#d2d2d2"></div>
<div class="abs" style="left:281px;top:869px;width:1px;height:25px;background:#d2d2d2"></div>
<div class="t" style="left:8px;width:106px;text-align:center;top:871px;letter-spacing:-.1px">Предупреждение</div>
<div class="t" style="left:120px;top:871px">Воздушный участок:495-500</div>
<div class="t" style="left:285px;top:871px;letter-spacing:-.05px">(W309) Температура выше лимита ползучести. Задайте коэффициенты усреднения и релаксации и включите опцию расчета высокотемператруных трубопроводов</div>
<div class="abs" style="left:1397px;top:869px;width:56px;height:25px;background:#ececec;border-left:1px solid #fff;border-bottom:2px solid #6e6e6e"></div>
<div class="t" style="left:1422px;top:874px">?</div>
<div class="abs" style="left:1397px;top:794px;width:1px;height:100px;background:#a0a0a0"></div>
<div class="abs" style="left:1453px;top:772px;width:15px;height:121px;background:#f0f0f0"></div>
<svg class="ico" style="left:1456px;top:778px" width="9" height="6" viewBox="0 0 9 6"><path d="M1 5l3.5-3.5L8 5" fill="none" stroke="#444" stroke-width="2"/></svg>
<div class="abs" style="left:1454px;top:790px;width:13px;height:16px;background:#cdcdcd"></div>
<svg class="ico" style="left:1456px;top:880px" width="9" height="6" viewBox="0 0 9 6"><path d="M1 1l3.5 3.5L8 1" fill="none" stroke="#444" stroke-width="2"/></svg>
<div class="abs" style="left:7px;top:893px;width:1461px;height:17px;background:#f0f0f0"></div>
<div class="abs" style="left:25px;top:894px;width:1407px;height:14px;background:#cdcdcd"></div>
<svg class="ico" style="left:12px;top:896px" width="6" height="9" viewBox="0 0 6 9"><path d="M5 1L1.5 4.5 5 8" fill="none" stroke="#444" stroke-width="2"/></svg>
<svg class="ico" style="left:1441px;top:896px" width="6" height="9" viewBox="0 0 6 9"><path d="M1 1l3.5 3.5L1 8" fill="none" stroke="#444" stroke-width="2"/></svg>
<div class="abs" style="left:5px;top:916px;width:120px;height:21px;background:#ececf0;border-right:1px solid #d8d8de"></div>
<div class="abs" style="left:125px;top:916px;width:185px;height:21px;background:#fdfdfd;border:1px solid #e4e4ea;border-bottom:none"></div>
<svg class="ico" style="left:7px;top:919px" width="15" height="15" viewBox="0 0 15 15"><rect x=".5" y=".5" width="14" height="14" fill="#fff" stroke="#5a7ab8"/><path d="M1 3.5h13M1 6.5h13M1 9.5h13M1 12.5h13" stroke="#7aa0e0"/><path d="M3.5 1v13" stroke="#d06040"/></svg>
<div class="t" style="left:25px;top:919px">Список участков</div>
<svg class="ico" style="left:128px;top:918px" width="17" height="17" viewBox="0 0 17 17"><path d="M1.5 3.5h10v12h-10z" fill="#f4f4f8" stroke="#8a8a9a"/><rect x="4" y="1.5" width="5" height="3" fill="#d8c080" stroke="#8a7a40" stroke-width=".6"/><circle cx="11.5" cy="12" r="4.5" fill="#e85a3a"/><path d="M9.5 10l4 4M13.5 10l-4 4" stroke="#fff" stroke-width="1.3"/></svg>
<div class="t" style="left:146px;top:920px">Ошибки и предупреждения</div>
<div class="abs" style="left:1392px;top:941px;width:28px;height:17px;border:1px solid #c0c4cc;border-right-color:#f8f8fc;border-bottom-color:#f8f8fc"></div>
<div class="abs" style="left:1423px;top:941px;width:34px;height:17px;border:1px solid #c0c4cc;border-right-color:#f8f8fc;border-bottom-color:#f8f8fc"></div>
<div class="abs" style="left:1460px;top:941px;width:31px;height:17px;border:1px solid #c0c4cc;border-right-color:#f8f8fc;border-bottom-color:#f8f8fc"></div>
<div class="t" style="left:1425px;top:943px">NUM</div>
<svg class="ico" style="left:1498px;top:946px" width="11" height="11" viewBox="0 0 11 11"><g fill="#b8bcc6"><rect x="8" y="0" width="2" height="2"/><rect x="4" y="4" width="2" height="2"/><rect x="8" y="4" width="2" height="2"/><rect x="0" y="8" width="2" height="2"/><rect x="4" y="8" width="2" height="2"/><rect x="8" y="8" width="2" height="2"/></g></svg>
<svg class="ico" style="left:1481px;top:122px" width="18" height="18" viewBox="0 0 18 18"><g fill="none"><rect x="1" y="3" width="16" height="8" rx="3" fill="#2a6ad8" stroke="#0a2a88"/><rect x="3" y="4" width="11" height="2" rx="1" fill="#8ab8ff"/></g></svg>
<svg class="ico" style="left:1501px;top:128px" width="6" height="4" viewBox="0 0 6 4"><path d="M0 0h6L3 3.5z" fill="#000"/></svg>
<svg class="ico" style="left:1481px;top:141px" width="18" height="18" viewBox="0 0 18 18"><g fill="none"><path d="M2 15V9q0-6 6-6h7v6H9q-1 0-1 1v5z" fill="#b8bccb"/></g></svg>
<svg class="ico" style="left:1501px;top:147px" width="6" height="4" viewBox="0 0 6 4"><path d="M0 0h6L3 3.5z" fill="#9a9ea8"/></svg>
<svg class="ico" style="left:1481px;top:163px" width="18" height="18" viewBox="0 0 18 18"><g fill="none"><path d="M1 15V9h5V5h6v4h5v6z" fill="#b8bccb"/></g></svg>
<svg class="ico" style="left:1501px;top:169px" width="6" height="4" viewBox="0 0 6 4"><path d="M0 0h6L3 3.5z" fill="#9a9ea8"/></svg>
<svg class="ico" style="left:1481px;top:185px" width="18" height="18" viewBox="0 0 18 18"><g fill="none"><path d="M3 2l12 7-12 7z" fill="#b8bccb"/></g></svg>
<svg class="ico" style="left:1501px;top:191px" width="6" height="4" viewBox="0 0 6 4"><path d="M0 0h6L3 3.5z" fill="#9a9ea8"/></svg>
<svg class="ico" style="left:1481px;top:207px" width="18" height="18" viewBox="0 0 18 18"><g fill="none"><rect x="4" y="3" width="11" height="12" fill="#b8bccb"/><circle cx="9.5" cy="9" r="3" fill="#eef0f6"/></g></svg>
<svg class="ico" style="left:1481px;top:229px" width="18" height="18" viewBox="0 0 18 18"><g fill="none"><path d="M7 3q7 0 7 6t-7 6z" fill="#b8bccb"/></g></svg>
<svg class="ico" style="left:1481px;top:251px" width="18" height="18" viewBox="0 0 18 18"><g fill="none"><path d="M2 3l7 6 7-6v12l-7-6-7 6z" fill="#b8bccb"/></g></svg>
<svg class="ico" style="left:1481px;top:273px" width="18" height="18" viewBox="0 0 18 18"><g fill="none"><rect x="4" y="4" width="11" height="11" fill="#b8bccb"/><path d="M2 9h15M7 2v15M12 2v15" stroke="#b8bccb" stroke-width="1.5"/></g></svg>
<svg class="ico" style="left:1481px;top:295px" width="18" height="18" viewBox="0 0 18 18"><g fill="none"><rect x="4" y="5" width="6" height="9" fill="#b8bccb"/><rect x="10" y="7" width="6" height="5" fill="#b8bccb"/><path d="M1 9h3" stroke="#b8bccb" stroke-width="2"/></g></svg>
<svg class="ico" style="left:1481px;top:323px" width="18" height="18" viewBox="0 0 18 18"><g fill="none"><path d="M3 3l12 12M15 3L3 15" stroke="#b8bccb" stroke-width="1.6"/></g></svg>
<svg class="ico" style="left:1481px;top:345px" width="18" height="18" viewBox="0 0 18 18"><g fill="none"><path d="M3 3h12M9 3v9M3 12h12M4 15l2-3M8 15l2-3M12 15l2-3" stroke="#b8bccb" stroke-width="1.5"/><path d="M6 9l3-3 3 3" fill="none" stroke="#b8bccb"/></g></svg>
<svg class="ico" style="left:1481px;top:367px" width="18" height="18" viewBox="0 0 18 18"><g fill="none"><path d="M3 6h13M3 9h13M3 12l3-3M7 12l3-3M11 12l3-3" stroke="#b8bccb" stroke-width="1.5"/></g></svg>
<svg class="ico" style="left:1481px;top:389px" width="18" height="18" viewBox="0 0 18 18"><g fill="none"><path d="M3 4h13M3 7h13M3 10h13M3 13h13M3 16l3-3" stroke="#b8bccb" stroke-width="1.3"/></g></svg>
<svg class="ico" style="left:1481px;top:411px" width="18" height="18" viewBox="0 0 18 18"><g fill="none"><path d="M3 4h13M3 7h13M3 10h13M3 13h13M3 16l3-3" stroke="#b8bccb" stroke-width="1.3"/></g></svg>
<svg class="ico" style="left:1481px;top:433px" width="18" height="18" viewBox="0 0 18 18"><g fill="none"><circle cx="9" cy="9" r="4" fill="#b8bccb"/><path d="M1 9h4M13 9h4M9 1v3M9 14v3" stroke="#b8bccb" stroke-width="1.5"/></g></svg>
<svg class="ico" style="left:1501px;top:439px" width="6" height="4" viewBox="0 0 6 4"><path d="M0 0h6L3 3.5z" fill="#9a9ea8"/></svg>
<svg class="ico" style="left:1481px;top:455px" width="18" height="18" viewBox="0 0 18 18"><g fill="none"><path d="M2 13h15M5 13V10h9v3M9.5 10V5" stroke="#b8bccb" stroke-width="1.8"/></g></svg>
<svg class="ico" style="left:1481px;top:477px" width="18" height="18" viewBox="0 0 18 18"><g fill="none"><path d="M2 14h15M2 11h15M9.5 11V3M7 6l2.5-3 2.5 3" fill="none" stroke="#b8bccb" stroke-width="1.6"/></g></svg>
<svg class="ico" style="left:1501px;top:483px" width="6" height="4" viewBox="0 0 6 4"><path d="M0 0h6L3 3.5z" fill="#9a9ea8"/></svg>
<svg class="ico" style="left:1481px;top:499px" width="18" height="18" viewBox="0 0 18 18"><g fill="none"><path d="M5 4h10M5 15h10M10 4v11M4 9h12" stroke="#b8bccb" stroke-width="1.8"/><text x="2" y="9" font-size="8" fill="#b8bccb" font-family="Liberation Sans">?</text></g></svg>
<svg class="ico" style="left:1481px;top:521px" width="18" height="18" viewBox="0 0 18 18"><g fill="none"><path d="M2 15h15" stroke="#b8bccb" stroke-width="1.8"/><text x="9.5" y="12" font-size="8" font-weight="bold" fill="#b8bccb" text-anchor="middle" font-family="Liberation Sans">M</text></g></svg>
<svg class="ico" style="left:1481px;top:549px" width="18" height="18" viewBox="0 0 18 18"><g fill="none"><rect x="3" y="3" width="13" height="13" fill="none" stroke="#b8bccb" stroke-width="1.5"/><rect x="5" y="6" width="9" height="7" fill="#b8bccb"/><path d="M6 6v7M9 6v7M12 6v7" stroke="#eef" /></g></svg>
<svg class="ico" style="left:1481px;top:571px" width="18" height="18" viewBox="0 0 18 18"><g fill="none"><rect x="3" y="5" width="12" height="9" rx="2" fill="#b8bccb"/><path d="M1 9.5h2M15 9.5h2" stroke="#b8bccb" stroke-width="2"/></g></svg>
<svg class="ico" style="left:1501px;top:577px" width="6" height="4" viewBox="0 0 6 4"><path d="M0 0h6L3 3.5z" fill="#9a9ea8"/></svg>
<svg class="ico" style="left:1481px;top:593px" width="18" height="18" viewBox="0 0 18 18"><g fill="none"><rect x="4" y="4" width="11" height="11" rx="3" fill="#b8bccb"/><rect x="2" y="6" width="15" height="7" rx="2" fill="#b8bccb"/></g></svg>
<svg class="ico" style="left:1481px;top:615px" width="18" height="18" viewBox="0 0 18 18"><g fill="none"><rect x="6" y="6" width="10" height="10" rx="3" fill="#b8bccb"/><text x="3" y="8" font-size="8" fill="#b8bccb" font-family="Liberation Sans">?</text></g></svg>
<svg class="ico" style="left:1481px;top:643px" width="18" height="18" viewBox="0 0 18 18"><g fill="none"><path d="M3 11a6 6 0 0 1 12 0z" fill="none" stroke="#b8bccb" stroke-width="1.5"/><path d="M9 11l-3-3" stroke="#b8bccb"/><path d="M2 14h14" stroke="#b8bccb" stroke-width="2"/><circle cx="9" cy="14" r="1.5" fill="#b8bccb"/></g></svg>
<svg class="ico" style="left:1501px;top:649px" width="6" height="4" viewBox="0 0 6 4"><path d="M0 0h6L3 3.5z" fill="#9a9ea8"/></svg>
<svg class="ico" style="left:1481px;top:665px" width="18" height="18" viewBox="0 0 18 18"><g fill="none"><path d="M2 10h15M2 13h15M4 15l3-6M8 15l3-6M12 15l3-6" stroke="#b8bccb" stroke-width="1.3"/></g></svg>
<div class="abs" style="left:1477px;top:317px;width:30px;height:1px;background:#c8ccd6;box-shadow:0 1px 0 #fff"></div>
<div class="abs" style="left:1477px;top:545px;width:30px;height:1px;background:#c8ccd6;box-shadow:0 1px 0 #fff"></div>
<div class="abs" style="left:1477px;top:638px;width:30px;height:1px;background:#c8ccd6;box-shadow:0 1px 0 #fff"></div>
<div class="abs" style="left:208px;top:135px;width:1262px;height:602px;overflow:hidden"><svg class="abs" style="left:-208px;top:-135px" width="1515" height="962" viewBox="0 0 1515 962"><path d="M816 290 V178 Q816 170 823 166 L900 124" fill="none" stroke="#84848e" stroke-width="6" stroke-linejoin="round" stroke-linecap="round"/><path d="M816 290 V178 Q816 170 823 166 L900 124" fill="none" stroke="#babac4" stroke-width="4" stroke-linejoin="round" stroke-linecap="round"/><path d="M816 290 V178 Q816 170 823 166 L900 124" fill="none" stroke="#eeeef4" stroke-width="1.2" stroke-linejoin="round" stroke-linecap="round"/><path d="M963 290 V276 Q963 270 970 266 L1066 213 L1077 199 L1043 179" fill="none" stroke="#84848e" stroke-width="6" stroke-linejoin="round" stroke-linecap="round"/><path d="M963 290 V276 Q963 270 970 266 L1066 213 L1077 199 L1043 179" fill="none" stroke="#babac4" stroke-width="4" stroke-linejoin="round" stroke-linecap="round"/><path d="M963 290 V276 Q963 270 970 266 L1066 213 L1077 199 L1043 179" fill="none" stroke="#eeeef4" stroke-width="1.2" stroke-linejoin="round" stroke-linecap="round"/><path d="M540 605 L648 667" fill="none" stroke="#84848e" stroke-width="5" stroke-linejoin="round" stroke-linecap="round"/><path d="M540 605 L648 667" fill="none" stroke="#babac4" stroke-width="3" stroke-linejoin="round" stroke-linecap="round"/><path d="M540 605 L648 667" fill="none" stroke="#eeeef4" stroke-width="1.2" stroke-linejoin="round" stroke-linecap="round"/><path d="M632 628 V651 L648 642" fill="none" stroke="#84848e" stroke-width="6" stroke-linejoin="round" stroke-linecap="round"/><path d="M632 628 V651 L648 642" fill="none" stroke="#babac4" stroke-width="4" stroke-linejoin="round" stroke-linecap="round"/><path d="M632 628 V651 L648 642" fill="none" stroke="#eeeef4" stroke-width="1.2" stroke-linejoin="round" stroke-linecap="round"/><path d="M632 627 L670 648" fill="none" stroke="#84848e" stroke-width="4" stroke-linejoin="round" stroke-linecap="round"/><path d="M632 627 L670 648" fill="none" stroke="#babac4" stroke-width="2" stroke-linejoin="round" stroke-linecap="round"/><path d="M632 627 L670 648" fill="none" stroke="#eeeef4" stroke-width="1.2" stroke-linejoin="round" stroke-linecap="round"/><path d="M649 637 V667" fill="none" stroke="#84848e" stroke-width="6" stroke-linejoin="round" stroke-linecap="round"/><path d="M649 637 V667" fill="none" stroke="#babac4" stroke-width="4" stroke-linejoin="round" stroke-linecap="round"/><path d="M649 637 V667" fill="none" stroke="#eeeef4" stroke-width="1.2" stroke-linejoin="round" stroke-linecap="round"/><path d="M653 641 V656" fill="none" stroke="#84848e" stroke-width="5" stroke-linejoin="round" stroke-linecap="round"/><path d="M653 641 V656" fill="none" stroke="#babac4" stroke-width="3" stroke-linejoin="round" stroke-linecap="round"/><path d="M653 641 V656" fill="none" stroke="#eeeef4" stroke-width="1.2" stroke-linejoin="round" stroke-linecap="round"/><path d="M671 654 V673 L691 664 V676" fill="none" stroke="#84848e" stroke-width="6" stroke-linejoin="round" stroke-linecap="round"/><path d="M671 654 V673 L691 664 V676" fill="none" stroke="#babac4" stroke-width="4" stroke-linejoin="round" stroke-linecap="round"/><path d="M671 654 V673 L691 664 V676" fill="none" stroke="#eeeef4" stroke-width="1.2" stroke-linejoin="round" stroke-linecap="round"/><rect x="814.2" y="212.2" width="3.6" height="3.6" fill="#1818d8"/><rect x="814.2" y="268.2" width="3.6" height="3.6" fill="#1818d8"/><rect x="820.2" y="168.2" width="3.6" height="3.6" fill="#1818d8"/><rect x="858.2" y="146.2" width="3.6" height="3.6" fill="#1818d8"/><rect x="968.2" y="268.2" width="3.6" height="3.6" fill="#1818d8"/><rect x="1022.2" y="236.2" width="3.6" height="3.6" fill="#1818d8"/><rect x="1054.2" y="218.2" width="3.6" height="3.6" fill="#1818d8"/><rect x="1064.2" y="211.2" width="3.6" height="3.6" fill="#1818d8"/><rect x="1075.2" y="197.2" width="3.6" height="3.6" fill="#1818d8"/><rect x="1041.2" y="177.2" width="3.6" height="3.6" fill="#1818d8"/><rect x="539.2" y="604.2" width="3.6" height="3.6" fill="#1818d8"/><rect x="545.2" y="608.2" width="3.6" height="3.6" fill="#1818d8"/><rect x="576.2" y="626.2" width="3.6" height="3.6" fill="#1818d8"/><rect x="608.2" y="644.2" width="3.6" height="3.6" fill="#1818d8"/><rect x="640.2" y="663.2" width="3.6" height="3.6" fill="#1818d8"/><rect x="646.2" y="666.2" width="3.6" height="3.6" fill="#1818d8"/><rect x="630.2" y="626.2" width="3.6" height="3.6" fill="#1818d8"/><rect x="633.2" y="630.2" width="3.6" height="3.6" fill="#1818d8"/><rect x="638.2" y="628.2" width="3.6" height="3.6" fill="#1818d8"/><rect x="644.2" y="632.2" width="3.6" height="3.6" fill="#1818d8"/><rect x="652.2" y="639.2" width="3.6" height="3.6" fill="#1818d8"/><rect x="659.2" y="641.2" width="3.6" height="3.6" fill="#1818d8"/><rect x="669.2" y="648.2" width="3.6" height="3.6" fill="#1818d8"/><rect x="630.2" y="650.2" width="3.6" height="3.6" fill="#1818d8"/><rect x="638.2" y="647.2" width="3.6" height="3.6" fill="#1818d8"/><rect x="654.2" y="650.2" width="3.6" height="3.6" fill="#1818d8"/><rect x="668.2" y="671.2" width="3.6" height="3.6" fill="#1818d8"/><rect x="678.2" y="668.2" width="3.6" height="3.6" fill="#1818d8"/><rect x="688.2" y="662.2" width="3.6" height="3.6" fill="#1818d8"/><rect x="688.2" y="674.2" width="3.6" height="3.6" fill="#1818d8"/><rect x="695.2" y="672.2" width="3.6" height="3.6" fill="#1818d8"/><path d="M812.5 213.5l3.5-5 3.5 5z" fill="#4ab84a" stroke="#2a7a2a" stroke-width=".6"/><path d="M812.5 269.5l3.5-5 3.5 5z" fill="#4ab84a" stroke="#2a7a2a" stroke-width=".6"/><path d="M821.5 164.5l3.5-5 3.5 5z" fill="#4ab84a" stroke="#2a7a2a" stroke-width=".6"/><path d="M857.5 143.5l3.5-5 3.5 5z" fill="#4ab84a" stroke="#2a7a2a" stroke-width=".6"/><path d="M983.5 259.5l3.5-5 3.5 5z" fill="#4ab84a" stroke="#2a7a2a" stroke-width=".6"/><path d="M1018.5 236.5l3.5-5 3.5 5z" fill="#4ab84a" stroke="#2a7a2a" stroke-width=".6"/><path d="M1056.5 217.5l3.5-5 3.5 5z" fill="#4ab84a" stroke="#2a7a2a" stroke-width=".6"/><path d="M1067.5 191.5l3.5-5 3.5 5z" fill="#4ab84a" stroke="#2a7a2a" stroke-width=".6"/><path d="M1040.5 177.5l3.5-5 3.5 5z" fill="#4ab84a" stroke="#2a7a2a" stroke-width=".6"/><path d="M544.5 604.5l3.5-5 3.5 5z" fill="#4ab84a" stroke="#2a7a2a" stroke-width=".6"/><path d="M575.5 623.5l3.5-5 3.5 5z" fill="#4ab84a" stroke="#2a7a2a" stroke-width=".6"/><path d="M607.5 644.5l3.5-5 3.5 5z" fill="#4ab84a" stroke="#2a7a2a" stroke-width=".6"/><path d="M639.5 662.5l3.5-5 3.5 5z" fill="#4ab84a" stroke="#2a7a2a" stroke-width=".6"/><path d="M636.5 642.5l3.5-5 3.5 5z" fill="#4ab84a" stroke="#2a7a2a" stroke-width=".6"/><path d="M654.5 649.5l3.5-5 3.5 5z" fill="#4ab84a" stroke="#2a7a2a" stroke-width=".6"/><path d="M657.5 638.5l3.5-5 3.5 5z" fill="#4ab84a" stroke="#2a7a2a" stroke-width=".6"/><path d="M676.5 666.5l3.5-5 3.5 5z" fill="#4ab84a" stroke="#2a7a2a" stroke-width=".6"/><path d="M696.5 678.5l3.5-5 3.5 5z" fill="#4ab84a" stroke="#2a7a2a" stroke-width=".6"/><path d="M629.5 625.5l3.5-5 3.5 5z" fill="#4ab84a" stroke="#2a7a2a" stroke-width=".6"/></svg></div>
<svg class="ico" style="left:1350px;top:612px" width="90" height="90" viewBox="0 0 90 90"><path d="M44 10V50M44 50L11 68M44 50L77 68" stroke="#0000b0" stroke-width="2.2" fill="none"/><text x="32" y="11" font-size="9" font-weight="bold" fill="#d01010" font-family="Liberation Mono">Z</text><text x="5" y="84" font-size="9" font-weight="bold" fill="#d01010" font-family="Liberation Mono">X</text><text x="72" y="84" font-size="9" font-weight="bold" fill="#d01010" font-family="Liberation Mono">Y</text></svg>
<div class="abs" style="left:429px;top:56px;width:348px;height:19px;background:#fff;border:1px solid #3c7fb1"></div>
<div class="t" style="left:432px;top:59px;font-size:11px;letter-spacing:-.3px">1. 'Рабочий' (0)</div>
<div class="abs" style="left:762px;top:57px;width:14px;height:17px;background:#a9c2ea;border-left:1px solid #3c7fb1"></div>
<svg class="ico" style="left:766px;top:63px" width="7" height="4" viewBox="0 0 7 4"><path d="M0 0h7L3.5 4z" fill="#000"/></svg>
<div class="abs" style="left:428px;top:75px;width:350px;height:68px;background:#fff;border:1px solid #2f6fc0;box-shadow:2px 2px 2px rgba(0,0,0,.3)"></div>
<div class="abs" style="left:429px;top:76px;width:348px;height:13px;background:#0078d7"></div>
<div class="t" style="left:431px;top:77px;color:#fff;line-height:13px;font-size:11px;letter-spacing:-.3px">1. 'Рабочий' (0)</div>
<div class="t" style="left:431px;top:90px;color:#000;line-height:13px;font-size:11px;letter-spacing:-.3px">2. 'Пропарка' (2)</div>
<div class="t" style="left:431px;top:103px;color:#000;line-height:13px;font-size:11px;letter-spacing:-.3px">3. 'Аварийный' (3)</div>
<div class="t" style="left:431px;top:116px;color:#000;line-height:13px;font-size:11px;letter-spacing:-.3px">3.1. 'Предклапан1'</div>
<div class="t" style="left:431px;top:129px;color:#000;line-height:13px;font-size:11px;letter-spacing:-.3px">3.2. 'Предклапан2'</div>
<div class="abs" style="left:119px;top:290px;width:1098px;height:312px;background:linear-gradient(90deg,#e8eaf8,#eef2fb 60%,#f0f4fc);border:1px solid #4a8fd0;box-shadow:0 0 0 1px rgba(120,170,220,.25)"></div>
<div class="abs" style="left:120px;top:291px;width:1096px;height:29px;background:#fff"></div>
<svg class="ico" style="left:128px;top:296px" width="17" height="17" viewBox="0 0 17 17"><path d="M8.5 4L3.5 13h10z" fill="none" stroke="#9a8a7a" stroke-width="1.6"/><circle cx="8.5" cy="3.5" r="2.5" fill="#7a9ae0"/><circle cx="3" cy="13.5" r="2.5" fill="#e07040"/><circle cx="14" cy="13.5" r="2.5" fill="#60b040"/></svg>
<div class="t" style="left:149px;top:298px">Редактор режимов работы</div>
<svg class="ico" style="left:1196px;top:299px" width="11" height="11" viewBox="0 0 11 11"><path d="M.5 .5l10 10M10.5 .5l-10 10" stroke="#111" stroke-width="1.2"/></svg>
<div class="abs" style="left:129px;top:331px;width:1019px;height:240px;background:#fff;border:1px solid #646464;border-top-width:2px;border-left-width:1px"></div>
<div class="abs" style="left:130px;top:333px;width:1016px;height:19px;background:#e2e2d6;border-bottom:1px solid #a9a99e"></div>
<div class="abs" style="left:151px;top:333px;width:1px;height:19px;background:#b5b5aa"></div>
<div class="t" style="left:133px;top:335px">*</div>
<div class="abs" style="left:152px;top:333px;width:1px;height:19px;background:#fbfbf6"></div>
<div class="abs" style="left:191px;top:333px;width:1px;height:19px;background:#b5b5aa"></div>
<div class="t" style="left:154px;top:335px">#</div>
<div class="abs" style="left:192px;top:333px;width:1px;height:19px;background:#fbfbf6"></div>
<div class="abs" style="left:272px;top:333px;width:1px;height:19px;background:#b5b5aa"></div>
<div class="t" style="left:194px;top:335px">Имя</div>
<div class="abs" style="left:273px;top:333px;width:1px;height:19px;background:#fbfbf6"></div>
<div class="abs" style="left:386px;top:333px;width:1px;height:19px;background:#b5b5aa"></div>
<div class="t" style="left:275px;top:335px">Подбор креплений</div>
<div class="abs" style="left:387px;top:333px;width:1px;height:19px;background:#fbfbf6"></div>
<div class="abs" style="left:514px;top:333px;width:1px;height:19px;background:#b5b5aa"></div>
<div class="t" style="left:389px;top:335px">Высокая температура</div>
<div class="abs" style="left:515px;top:333px;width:1px;height:19px;background:#fbfbf6"></div>
<div class="abs" style="left:647px;top:333px;width:1px;height:19px;background:#b5b5aa"></div>
<div class="t" style="left:517px;top:335px">Монтажное состояние</div>
<div class="abs" style="left:648px;top:333px;width:1px;height:19px;background:#fbfbf6"></div>
<div class="abs" style="left:710px;top:333px;width:1px;height:19px;background:#b5b5aa"></div>
<div class="t" style="left:650px;top:335px">Сейсмика</div>
<div class="abs" style="left:711px;top:333px;width:1px;height:19px;background:#fbfbf6"></div>
<div class="abs" style="left:749px;top:333px;width:1px;height:19px;background:#b5b5aa"></div>
<div class="t" style="left:713px;top:335px">Ветер</div>
<div class="abs" style="left:750px;top:333px;width:1px;height:19px;background:#fbfbf6"></div>
<div class="abs" style="left:808px;top:333px;width:1px;height:19px;background:#b5b5aa"></div>
<div class="t" style="left:752px;top:335px">Снег/Лед</div>
<div class="abs" style="left:809px;top:333px;width:1px;height:19px;background:#fbfbf6"></div>
<div class="abs" style="left:905px;top:333px;width:1px;height:19px;background:#b5b5aa"></div>
<div class="t" style="left:811px;top:335px">Коэф. к Ктрения</div>
<div class="abs" style="left:906px;top:333px;width:1px;height:19px;background:#fbfbf6"></div>
<div class="abs" style="left:997px;top:333px;width:1px;height:19px;background:#b5b5aa"></div>
<div class="t" style="left:908px;top:335px">Тип режима</div>
<div class="abs" style="left:998px;top:333px;width:1px;height:19px;background:#fbfbf6"></div>
<div class="abs" style="left:1146px;top:333px;width:1px;height:19px;background:#b5b5aa"></div>
<div class="t" style="left:1000px;top:335px">Размах между режимами</div>
<div class="abs" style="left:130px;top:352px;width:1016px;height:20px;background:#fff;border-bottom:1px solid #e4e3d8"></div>
<div class="abs" style="left:151px;top:352px;width:1px;height:20px;background:#e4e3d8"></div>
<div class="abs" style="left:191px;top:352px;width:1px;height:20px;background:#e4e3d8"></div>
<div class="abs" style="left:272px;top:352px;width:1px;height:20px;background:#e4e3d8"></div>
<div class="abs" style="left:386px;top:352px;width:1px;height:20px;background:#e4e3d8"></div>
<div class="abs" style="left:514px;top:352px;width:1px;height:20px;background:#e4e3d8"></div>
<div class="abs" style="left:647px;top:352px;width:1px;height:20px;background:#e4e3d8"></div>
<div class="abs" style="left:710px;top:352px;width:1px;height:20px;background:#e4e3d8"></div>
<div class="abs" style="left:749px;top:352px;width:1px;height:20px;background:#e4e3d8"></div>
<div class="abs" style="left:808px;top:352px;width:1px;height:20px;background:#e4e3d8"></div>
<div class="abs" style="left:905px;top:352px;width:1px;height:20px;background:#e4e3d8"></div>
<div class="abs" style="left:997px;top:352px;width:1px;height:20px;background:#e4e3d8"></div>
<svg class="ico" style="left:132px;top:355px" width="13" height="13" viewBox="0 0 13 13"><rect x=".5" y=".5" width="12" height="12" fill="#fff" stroke="#333"/><path d="M2.5 6.5l3 3 5.5-6" fill="none" stroke="#333" stroke-width="1.1"/></svg>
<div class="t" style="left:154px;top:355px">1 (0)</div>
<div class="t" style="left:194px;top:355px">Рабочий</div>
<svg class="ico" style="left:275px;top:355px" width="13" height="13" viewBox="0 0 13 13"><rect x=".5" y=".5" width="12" height="12" fill="#fff" stroke="#333"/><path d="M2.5 6.5l3 3 5.5-6" fill="none" stroke="#333" stroke-width="1.1"/></svg>
<svg class="ico" style="left:389px;top:355px" width="13" height="13" viewBox="0 0 13 13"><rect x=".5" y=".5" width="12" height="12" fill="#fff" stroke="#333"/></svg>
<svg class="ico" style="left:517px;top:355px" width="13" height="13" viewBox="0 0 13 13"><rect x=".5" y=".5" width="12" height="12" fill="#fff" stroke="#333"/><path d="M2.5 6.5l3 3 5.5-6" fill="none" stroke="#333" stroke-width="1.1"/></svg>
<svg class="ico" style="left:650px;top:355px" width="13" height="13" viewBox="0 0 13 13"><rect x=".5" y=".5" width="12" height="12" fill="#fff" stroke="#333"/></svg>
<svg class="ico" style="left:713px;top:355px" width="13" height="13" viewBox="0 0 13 13"><rect x=".5" y=".5" width="12" height="12" fill="#fff" stroke="#333"/></svg>
<svg class="ico" style="left:752px;top:355px" width="13" height="13" viewBox="0 0 13 13"><rect x=".5" y=".5" width="12" height="12" fill="#fff" stroke="#333"/></svg>
<div class="t" style="left:825px;top:355px;width:77px;text-align:right">1.00</div>
<div class="t" style="left:908px;top:355px">ПДН</div>
<div class="abs" style="left:980px;top:353px;width:16px;height:18px;background:#e4e4e4;border:1px solid #c4c4c4"></div>
<svg class="ico" style="left:983px;top:359px" width="10" height="6" viewBox="0 0 10 6"><path d="M1 1l4 4 4-4" fill="none" stroke="#555" stroke-width="1.1"/></svg>
<div class="t" style="left:1000px;top:355px">1X</div>
<div class="abs" style="left:1128px;top:353px;width:16px;height:18px;background:#e4e4e4;border:1px solid #c4c4c4"></div>
<svg class="ico" style="left:1131px;top:359px" width="10" height="6" viewBox="0 0 10 6"><path d="M1 1l4 4 4-4" fill="none" stroke="#555" stroke-width="1.1"/></svg>
<div class="abs" style="left:130px;top:372px;width:1016px;height:20px;background:#e2e2d6;border-bottom:1px solid #e4e3d8"></div>
<div class="abs" style="left:151px;top:372px;width:1px;height:20px;background:#e4e3d8"></div>
<div class="abs" style="left:191px;top:372px;width:1px;height:20px;background:#e4e3d8"></div>
<div class="abs" style="left:272px;top:372px;width:1px;height:20px;background:#e4e3d8"></div>
<div class="abs" style="left:386px;top:372px;width:1px;height:20px;background:#e4e3d8"></div>
<div class="abs" style="left:514px;top:372px;width:1px;height:20px;background:#e4e3d8"></div>
<div class="abs" style="left:647px;top:372px;width:1px;height:20px;background:#e4e3d8"></div>
<div class="abs" style="left:710px;top:372px;width:1px;height:20px;background:#e4e3d8"></div>
<div class="abs" style="left:749px;top:372px;width:1px;height:20px;background:#e4e3d8"></div>
<div class="abs" style="left:808px;top:372px;width:1px;height:20px;background:#e4e3d8"></div>
<div class="abs" style="left:905px;top:372px;width:1px;height:20px;background:#e4e3d8"></div>
<div class="abs" style="left:997px;top:372px;width:1px;height:20px;background:#e4e3d8"></div>
<svg class="ico" style="left:132px;top:375px" width="13" height="13" viewBox="0 0 13 13"><rect x=".5" y=".5" width="12" height="12" fill="#fff" stroke="#333"/><path d="M2.5 6.5l3 3 5.5-6" fill="none" stroke="#333" stroke-width="1.1"/></svg>
<div class="t" style="left:154px;top:375px">2 (2)</div>
<div class="t" style="left:194px;top:375px">Пропарка</div>
<svg class="ico" style="left:275px;top:375px" width="13" height="13" viewBox="0 0 13 13"><rect x=".5" y=".5" width="12" height="12" fill="#fff" stroke="#333"/></svg>
<svg class="ico" style="left:389px;top:375px" width="13" height="13" viewBox="0 0 13 13"><rect x=".5" y=".5" width="12" height="12" fill="#fff" stroke="#333"/><path d="M2.5 6.5l3 3 5.5-6" fill="none" stroke="#333" stroke-width="1.1"/></svg>
<svg class="ico" style="left:517px;top:375px" width="13" height="13" viewBox="0 0 13 13"><rect x=".5" y=".5" width="12" height="12" fill="#fff" stroke="#333"/></svg>
<svg class="ico" style="left:650px;top:375px" width="13" height="13" viewBox="0 0 13 13"><rect x=".5" y=".5" width="12" height="12" fill="#fff" stroke="#333"/></svg>
<svg class="ico" style="left:713px;top:375px" width="13" height="13" viewBox="0 0 13 13"><rect x=".5" y=".5" width="12" height="12" fill="#fff" stroke="#333"/></svg>
<svg class="ico" style="left:752px;top:375px" width="13" height="13" viewBox="0 0 13 13"><rect x=".5" y=".5" width="12" height="12" fill="#fff" stroke="#333"/></svg>
<div class="t" style="left:825px;top:375px;width:77px;text-align:right">1.00</div>
<div class="t" style="left:908px;top:375px">ПДН</div>
<div class="abs" style="left:980px;top:373px;width:16px;height:18px;background:#e4e4e4;border:1px solid #c4c4c4"></div>
<svg class="ico" style="left:983px;top:379px" width="10" height="6" viewBox="0 0 10 6"><path d="M1 1l4 4 4-4" fill="none" stroke="#555" stroke-width="1.1"/></svg>
<div class="t" style="left:1000px;top:375px">1X</div>
<div class="abs" style="left:1128px;top:373px;width:16px;height:18px;background:#e4e4e4;border:1px solid #c4c4c4"></div>
<svg class="ico" style="left:1131px;top:379px" width="10" height="6" viewBox="0 0 10 6"><path d="M1 1l4 4 4-4" fill="none" stroke="#555" stroke-width="1.1"/></svg>
<div class="abs" style="left:130px;top:392px;width:1016px;height:20px;background:#fff;border-bottom:1px solid #e4e3d8"></div>
<div class="abs" style="left:151px;top:392px;width:1px;height:20px;background:#e4e3d8"></div>
<div class="abs" style="left:191px;top:392px;width:1px;height:20px;background:#e4e3d8"></div>
<div class="abs" style="left:272px;top:392px;width:1px;height:20px;background:#e4e3d8"></div>
<div class="abs" style="left:386px;top:392px;width:1px;height:20px;background:#e4e3d8"></div>
<div class="abs" style="left:514px;top:392px;width:1px;height:20px;background:#e4e3d8"></div>
<div class="abs" style="left:647px;top:392px;width:1px;height:20px;background:#e4e3d8"></div>
<div class="abs" style="left:710px;top:392px;width:1px;height:20px;background:#e4e3d8"></div>
<div class="abs" style="left:749px;top:392px;width:1px;height:20px;background:#e4e3d8"></div>
<div class="abs" style="left:808px;top:392px;width:1px;height:20px;background:#e4e3d8"></div>
<div class="abs" style="left:905px;top:392px;width:1px;height:20px;background:#e4e3d8"></div>
<div class="abs" style="left:997px;top:392px;width:1px;height:20px;background:#e4e3d8"></div>
<svg class="ico" style="left:132px;top:395px" width="13" height="13" viewBox="0 0 13 13"><rect x=".5" y=".5" width="12" height="12" fill="#fff" stroke="#333"/><path d="M2.5 6.5l3 3 5.5-6" fill="none" stroke="#333" stroke-width="1.1"/></svg>
<div class="t" style="left:154px;top:395px">3 (3)</div>
<div class="t" style="left:194px;top:395px">Аварийный</div>
<svg class="ico" style="left:275px;top:395px" width="13" height="13" viewBox="0 0 13 13"><rect x=".5" y=".5" width="12" height="12" fill="#fff" stroke="#333"/></svg>
<svg class="ico" style="left:389px;top:395px" width="13" height="13" viewBox="0 0 13 13"><rect x=".5" y=".5" width="12" height="12" fill="#fff" stroke="#333"/></svg>
<svg class="ico" style="left:517px;top:395px" width="13" height="13" viewBox="0 0 13 13"><rect x=".5" y=".5" width="12" height="12" fill="#fff" stroke="#333"/></svg>
<svg class="ico" style="left:650px;top:395px" width="13" height="13" viewBox="0 0 13 13"><rect x=".5" y=".5" width="12" height="12" fill="#fff" stroke="#333"/></svg>
<svg class="ico" style="left:713px;top:395px" width="13" height="13" viewBox="0 0 13 13"><rect x=".5" y=".5" width="12" height="12" fill="#fff" stroke="#333"/></svg>
<svg class="ico" style="left:752px;top:395px" width="13" height="13" viewBox="0 0 13 13"><rect x=".5" y=".5" width="12" height="12" fill="#fff" stroke="#333"/></svg>
<div class="t" style="left:825px;top:395px;width:77px;text-align:right">1.00</div>
<div class="t" style="left:908px;top:395px">ПДН</div>
<div class="abs" style="left:980px;top:393px;width:16px;height:18px;background:#e4e4e4;border:1px solid #c4c4c4"></div>
<svg class="ico" style="left:983px;top:399px" width="10" height="6" viewBox="0 0 10 6"><path d="M1 1l4 4 4-4" fill="none" stroke="#555" stroke-width="1.1"/></svg>
<div class="t" style="left:1000px;top:395px">1X</div>
<div class="abs" style="left:1128px;top:393px;width:16px;height:18px;background:#e4e4e4;border:1px solid #c4c4c4"></div>
<svg class="ico" style="left:1131px;top:399px" width="10" height="6" viewBox="0 0 10 6"><path d="M1 1l4 4 4-4" fill="none" stroke="#555" stroke-width="1.1"/></svg>
<div class="abs" style="left:130px;top:412px;width:1016px;height:20px;background:#fff;border-bottom:1px solid #e4e3d8"></div>
<div class="abs" style="left:151px;top:412px;width:1px;height:20px;background:#e4e3d8"></div>
<div class="abs" style="left:191px;top:412px;width:1px;height:20px;background:#e4e3d8"></div>
<div class="abs" style="left:272px;top:412px;width:1px;height:20px;background:#e4e3d8"></div>
<div class="abs" style="left:386px;top:412px;width:1px;height:20px;background:#e4e3d8"></div>
<div class="abs" style="left:514px;top:412px;width:1px;height:20px;background:#e4e3d8"></div>
<div class="abs" style="left:647px;top:412px;width:1px;height:20px;background:#e4e3d8"></div>
<div class="abs" style="left:710px;top:412px;width:1px;height:20px;background:#e4e3d8"></div>
<div class="abs" style="left:749px;top:412px;width:1px;height:20px;background:#e4e3d8"></div>
<div class="abs" style="left:808px;top:412px;width:1px;height:20px;background:#e4e3d8"></div>
<div class="abs" style="left:905px;top:412px;width:1px;height:20px;background:#e4e3d8"></div>
<div class="abs" style="left:997px;top:412px;width:1px;height:20px;background:#e4e3d8"></div>
<div class="t" style="left:154px;top:415px">3.1 (0)</div>
<div class="t" style="left:194px;top:415px">Предклапан1</div>
<div class="t" style="left:275px;top:414px">-</div>
<div class="t" style="left:389px;top:414px">-</div>
<div class="t" style="left:517px;top:414px">-</div>
<div class="t" style="left:650px;top:414px">-</div>
<div class="t" style="left:713px;top:414px">-</div>
<div class="t" style="left:752px;top:414px">-</div>
<div class="t" style="left:811px;top:414px">-</div>
<div class="t" style="left:908px;top:415px">ПДК(k=1.15)</div>
<div class="abs" style="left:980px;top:413px;width:16px;height:18px;background:#e4e4e4;border:1px solid #c4c4c4"></div>
<svg class="ico" style="left:983px;top:419px" width="10" height="6" viewBox="0 0 10 6"><path d="M1 1l4 4 4-4" fill="none" stroke="#555" stroke-width="1.1"/></svg>
<div class="abs" style="left:130px;top:432px;width:1016px;height:20px;background:#fff;border-bottom:1px solid #e4e3d8"></div>
<div class="abs" style="left:151px;top:432px;width:1px;height:20px;background:#e4e3d8"></div>
<div class="abs" style="left:191px;top:432px;width:1px;height:20px;background:#e4e3d8"></div>
<div class="abs" style="left:272px;top:432px;width:1px;height:20px;background:#e4e3d8"></div>
<div class="abs" style="left:386px;top:432px;width:1px;height:20px;background:#e4e3d8"></div>
<div class="abs" style="left:514px;top:432px;width:1px;height:20px;background:#e4e3d8"></div>
<div class="abs" style="left:647px;top:432px;width:1px;height:20px;background:#e4e3d8"></div>
<div class="abs" style="left:710px;top:432px;width:1px;height:20px;background:#e4e3d8"></div>
<div class="abs" style="left:749px;top:432px;width:1px;height:20px;background:#e4e3d8"></div>
<div class="abs" style="left:808px;top:432px;width:1px;height:20px;background:#e4e3d8"></div>
<div class="abs" style="left:905px;top:432px;width:1px;height:20px;background:#e4e3d8"></div>
<div class="abs" style="left:997px;top:432px;width:1px;height:20px;background:#e4e3d8"></div>
<div class="t" style="left:154px;top:435px">3.2 (1)</div>
<div class="t" style="left:194px;top:435px">Предклапан2</div>
<div class="t" style="left:275px;top:434px">-</div>
<div class="t" style="left:389px;top:434px">-</div>
<div class="t" style="left:517px;top:434px">-</div>
<div class="t" style="left:650px;top:434px">-</div>
<div class="t" style="left:713px;top:434px">-</div>
<div class="t" style="left:752px;top:434px">-</div>
<div class="t" style="left:811px;top:434px">-</div>
<div class="t" style="left:908px;top:435px">ПДК(k=1.15)</div>
<div class="abs" style="left:980px;top:433px;width:16px;height:18px;background:#e4e4e4;border:1px solid #c4c4c4"></div>
<svg class="ico" style="left:983px;top:439px" width="10" height="6" viewBox="0 0 10 6"><path d="M1 1l4 4 4-4" fill="none" stroke="#555" stroke-width="1.1"/></svg>
<div class="abs" style="left:130px;top:452px;width:1016px;height:20px;background:#fff;border-bottom:1px solid #e4e3d8"></div>
<div class="abs" style="left:151px;top:452px;width:1px;height:20px;background:#e4e3d8"></div>
<div class="abs" style="left:191px;top:452px;width:1px;height:20px;background:#e4e3d8"></div>
<div class="abs" style="left:272px;top:452px;width:1px;height:20px;background:#e4e3d8"></div>
<div class="abs" style="left:386px;top:452px;width:1px;height:20px;background:#e4e3d8"></div>
<div class="abs" style="left:514px;top:452px;width:1px;height:20px;background:#e4e3d8"></div>
<div class="abs" style="left:647px;top:452px;width:1px;height:20px;background:#e4e3d8"></div>
<div class="abs" style="left:710px;top:452px;width:1px;height:20px;background:#e4e3d8"></div>
<div class="abs" style="left:749px;top:452px;width:1px;height:20px;background:#e4e3d8"></div>
<div class="abs" style="left:808px;top:452px;width:1px;height:20px;background:#e4e3d8"></div>
<div class="abs" style="left:905px;top:452px;width:1px;height:20px;background:#e4e3d8"></div>
<div class="abs" style="left:997px;top:452px;width:1px;height:20px;background:#e4e3d8"></div>
<svg class="ico" style="left:132px;top:455px" width="13" height="13" viewBox="0 0 13 13"><rect x=".5" y=".5" width="12" height="12" fill="#fff" stroke="#333"/><path d="M2.5 6.5l3 3 5.5-6" fill="none" stroke="#333" stroke-width="1.1"/></svg>
<div class="t" style="left:154px;top:455px">4 (1)</div>
<div class="t" style="left:194px;top:455px">Испытания</div>
<div class="t" style="left:908px;top:455px">Испытания</div>
<div class="abs" style="left:980px;top:453px;width:16px;height:18px;background:#e4e4e4;border:1px solid #c4c4c4"></div>
<svg class="ico" style="left:983px;top:459px" width="10" height="6" viewBox="0 0 10 6"><path d="M1 1l4 4 4-4" fill="none" stroke="#555" stroke-width="1.1"/></svg>
<div class="abs" style="left:1151px;top:338px;width:63px;height:23px;background:#e1e1d4;border:1px solid #acac9f"></div>
<div class="t" style="left:1151px;top:343px;width:63px;text-align:center;font-weight:normal">Добавить</div>
<div class="abs" style="left:1151px;top:364px;width:63px;height:23px;background:#e1e1d4;border:1px solid #acac9f"></div>
<div class="t" style="left:1151px;top:369px;width:63px;text-align:center;font-weight:normal">Удалить</div>
<div class="abs" style="left:1151px;top:390px;width:63px;height:23px;background:#e1e1d4;border:1px solid #acac9f"></div>
<div class="t" style="left:1151px;top:395px;width:63px;text-align:center;font-weight:normal">Вверх</div>
<div class="abs" style="left:1151px;top:416px;width:63px;height:23px;background:#e1e1d4;border:1px solid #acac9f"></div>
<div class="t" style="left:1151px;top:421px;width:63px;text-align:center;font-weight:normal">Вниз</div>
<div class="abs" style="left:971px;top:575px;width:75px;height:23px;background:#c4d3ee;border:1px solid #8a8f98"></div>
<div class="abs" style="left:973px;top:577px;width:71px;height:19px;border:1px dotted #000"></div>
<div class="t" style="left:971px;top:580px;width:75px;text-align:center;font-weight:bold">OK</div>
<div class="abs" style="left:1055px;top:575px;width:76px;height:23px;background:#e1e1d4;border:1px solid #acac9f"></div>
<div class="t" style="left:1055px;top:580px;width:76px;text-align:center;font-weight:normal">Отмена</div>
<div class="abs" style="left:1139px;top:575px;width:73px;height:23px;background:#e1e1d4;border:1px solid #acac9f"></div>
<div class="t" style="left:1139px;top:580px;width:73px;text-align:center;font-weight:normal">Справка</div>
<svg class="ico" style="left:1203px;top:592px" width="11" height="9" viewBox="0 0 11 9"><g fill="#c0c4cc"><rect x="8" y="0" width="2" height="2"/><rect x="4" y="3" width="2" height="2"/><rect x="8" y="3" width="2" height="2"/><rect x="0" y="6" width="2" height="2"/><rect x="4" y="6" width="2" height="2"/><rect x="8" y="6" width="2" height="2"/></g></svg>
</body></html>
